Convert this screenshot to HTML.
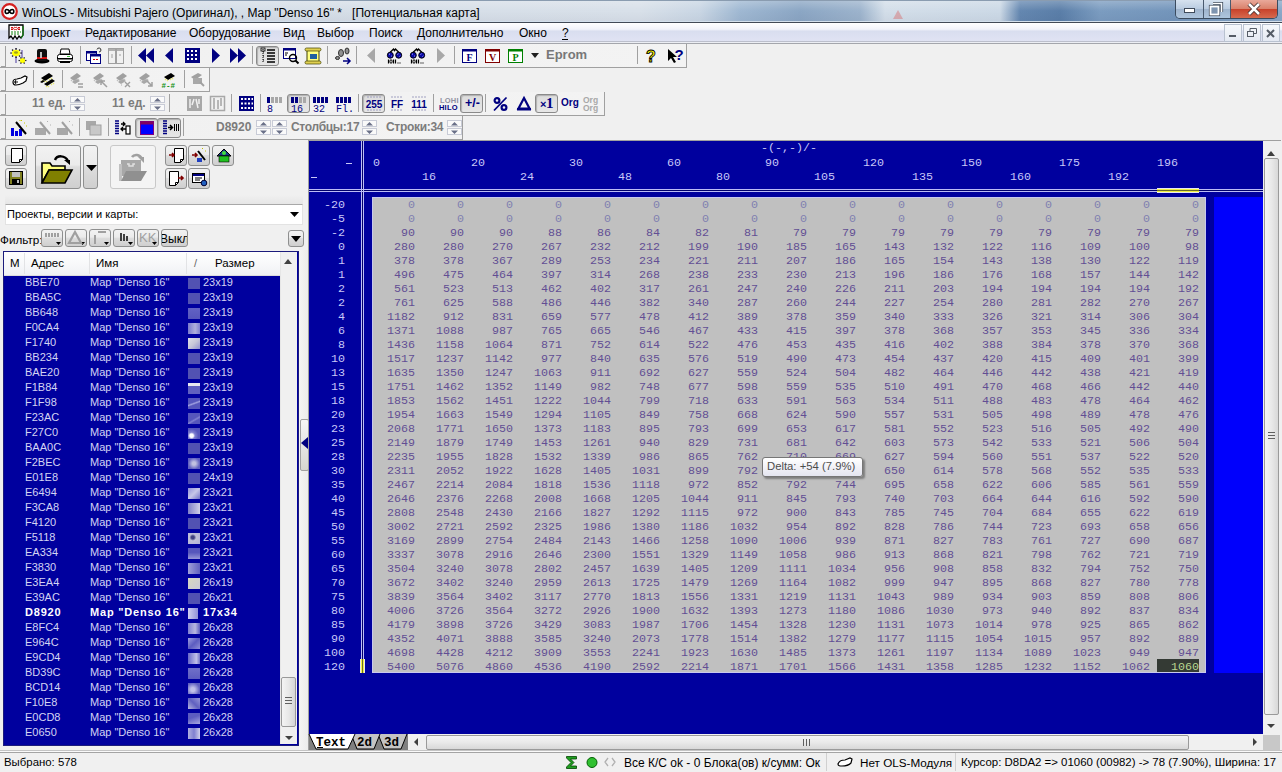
<!DOCTYPE html><html><head><meta charset="utf-8"><style>
*{box-sizing:border-box}
html,body{margin:0;padding:0}
body{width:1282px;height:772px;overflow:hidden;position:relative;background:#f0f0f0;font-family:"Liberation Sans",sans-serif;font-size:12px;color:#000}
.ab{position:absolute}
.t{position:absolute;white-space:nowrap;line-height:1}
svg{position:absolute;overflow:visible}
.tb{position:absolute;border-bottom:1px solid #a0a0a0;border-right:1px solid #a0a0a0;background:#f0f0f0}
.grip{position:absolute;left:5px;top:2px;bottom:1px;width:1px;background:#a0a0a0}
.sep{position:absolute;top:3px;width:1px;height:17px;background:#a0a0a0}
.pr{position:absolute;border:1px solid #8c8c8c;border-radius:3px;background:linear-gradient(#e4e4e4,#d8d8d8)}
.spin{position:absolute;width:15px;height:15px}
.mono{font-family:"Liberation Mono",monospace}
</style></head><body>
<div class="ab" style="left:0;top:0;width:1282px;height:22px;background:linear-gradient(90deg,#d3dce6 0px,#d8e0e9 640px,#c9d6e4 700px,#9fb8d2 740px,#8ba6c4 800px,#9cb3cc 860px,#d3dee9 885px,#ccd9e6 1000px,#6487b0 1020px,#5a7ea8 1060px,#7b9cc0 1100px,#7395bb 1175px,#8aa8c8 1282px)"></div>
<div class="ab" style="left:0;top:0;width:1282px;height:22px;background:linear-gradient(rgba(255,255,255,.25),rgba(255,255,255,0) 50%,rgba(0,0,40,.04))"></div>
<div class="ab" style="left:0;top:21px;width:1282px;height:1px;background:#d4e0ec"></div>
<div class="ab" style="left:0;top:22px;width:1282px;height:1px;background:#424a56"></div>
<div class="ab" style="left:0;top:0;width:1282px;height:1px;background:#8a9cb0"></div>
<svg style="left:892px;top:8px" width="14" height="12"><path d="M6 2L11 11H1Z" fill="#d86a6a" opacity=".45"/></svg>
<svg style="left:1px;top:3px" width="17" height="17" viewBox="0 0 17 17"><circle cx="8.5" cy="8.5" r="7.3" fill="#fff" stroke="#d42020" stroke-width="2.2"/><path d="M8.5 8.5 C7 5.8 4.2 6 4.2 8.5 C4.2 11 7 11.2 8.5 8.5 C10 5.8 12.8 6 12.8 8.5 C12.8 11 10 11.2 8.5 8.5Z" fill="none" stroke="#000" stroke-width="1.6"/></svg>
<div class="t" style="left:22px;top:7px;font-size:12px;color:#000">WinOLS - Mitsubishi Pajero (Оригинал), , Map "Denso 16" * &nbsp;&nbsp;[Потенциальная карта]</div>
<div class="ab" style="left:1175px;top:0;width:103px;height:19px;border:1px solid #3b4b5e;border-top:none;border-radius:0 0 5px 5px;overflow:hidden"><div class="ab" style="left:0;top:0;width:28px;height:18px;background:linear-gradient(#d6e2ef,#b9cbe0 50%,#9fb4cd 51%,#aec5dd);border-right:1px solid #4a5a6e"></div><div class="ab" style="left:28px;top:0;width:27px;height:18px;background:linear-gradient(#d6e2ef,#b9cbe0 50%,#9fb4cd 51%,#aec5dd);border-right:1px solid #4a5a6e"></div><div class="ab" style="left:55px;top:0;width:48px;height:18px;background:linear-gradient(#e9a99a,#d9806a 50%,#c8412a 51%,#d66a4e)"></div></div>
<div class="ab" style="left:1184px;top:8px;width:11px;height:5px;background:#fff;border:1px solid #3e4a5a"></div>
<svg style="left:1209px;top:2px" width="14" height="14" viewBox="0 0 14 14"><path d="M4 1.5H12.5V10" fill="none" stroke="#3e4a5a" stroke-width="3.2"/><path d="M4 1.5H12.5V10" fill="none" stroke="#fff" stroke-width="1.6"/><rect x="1.5" y="4.5" width="8" height="8" fill="none" stroke="#3e4a5a" stroke-width="3.2"/><rect x="1.5" y="4.5" width="8" height="8" fill="#7f95b0" stroke="#fff" stroke-width="1.8"/></svg>
<svg style="left:1247px;top:3px" width="14" height="12" viewBox="0 0 14 12"><path d="M2 1L12 11M12 1L2 11" stroke="#3a2a2a" stroke-width="4.2"/><path d="M2 1L12 11M12 1L2 11" stroke="#fff" stroke-width="2.6"/></svg>
<div class="ab" style="left:0;top:23px;width:1282px;height:18px;background:linear-gradient(#ffffff,#f2f3fa 35%,#d9deef 45%,#e0e3f3)"></div>
<div class="ab" style="left:0;top:41px;width:1282px;height:1px;background:#bcbfcc"></div>
<div class="ab" style="left:0;top:42px;width:1282px;height:1px;background:#eceef4"></div>
<div class="ab" style="left:0;top:43px;width:1282px;height:1px;background:#a4a6ac"></div>
<svg style="left:8px;top:24px" width="16" height="17" viewBox="0 0 16 17"><path d="M1 1H15V11L13 14L11 12L9 15L7 12L5 15L3 12L1 14Z" fill="#fff" stroke="#000" stroke-width="1.3"/><path d="M15 2V11L13 14" fill="none" stroke="#108010" stroke-width="1.2"/><path d="M3 3.5H5M4 3V6M3 5.5H5M7.5 3.5A1.2 1.2 0 1 0 7.5 5.5A1.2 1.2 0 1 0 7.5 3.5M10 3.5H12M11 3V6M10 5.5H12" fill="none" stroke="#d01010" stroke-width="1"/><path d="M3 8H13M3 10H12" stroke="#108010" stroke-width="1" stroke-dasharray="2 1"/></svg>
<div class="t" style="left:31px;top:27px;font-size:12px">Проект</div>
<div class="t" style="left:85px;top:27px;font-size:12px">Редактирование</div>
<div class="t" style="left:189px;top:27px;font-size:12px">Оборудование</div>
<div class="t" style="left:283px;top:27px;font-size:12px">Вид</div>
<div class="t" style="left:317px;top:27px;font-size:12px">Выбор</div>
<div class="t" style="left:369px;top:27px;font-size:12px">Поиск</div>
<div class="t" style="left:417px;top:27px;font-size:12px">Дополнительно</div>
<div class="t" style="left:519px;top:27px;font-size:12px">Окно</div>
<div class="t" style="left:562px;top:27px;font-size:12px">?</div>
<div class="ab" style="left:562px;top:39px;width:6px;height:1px;background:#000"></div>
<div class="ab" style="left:1224px;top:24px;width:18px;height:18px;border:1px solid #b9c2d0;background:linear-gradient(#f6f8fb,#e4e9f2)"></div>
<div class="ab" style="left:1243px;top:24px;width:18px;height:18px;border:1px solid #b9c2d0;background:linear-gradient(#f6f8fb,#e4e9f2)"></div>
<div class="ab" style="left:1262px;top:24px;width:18px;height:18px;border:1px solid #b9c2d0;background:linear-gradient(#f6f8fb,#e4e9f2)"></div>
<div class="ab" style="left:1229px;top:35px;width:7px;height:2px;background:#555c66"></div>
<svg style="left:1247px;top:28px" width="10" height="10"><rect x="0.5" y="3.5" width="6" height="5" fill="none" stroke="#555c66"/><path d="M3 3V0.5H9.5V5.5H7" fill="none" stroke="#555c66"/></svg>
<svg style="left:1266px;top:29px" width="10" height="10"><path d="M1 1L8 8M8 1L1 8" stroke="#555c66" stroke-width="2"/></svg>
<div class="ab" style="left:0px;top:44px;width:687px;height:24px;border-bottom:1px solid #a0a0a0;border-right:1px solid #a0a0a0;background:linear-gradient(90deg,#f0f0f0,#f3f3f3)"></div>
<div class="ab" style="left:5px;top:46px;width:1px;height:21px;background:#a0a0a0"></div>
<div class="ab" style="left:1px;top:66px;width:4px;height:1px;background:#a0a0a0"></div>
<svg style="left:11px;top:48px" width="16" height="16" viewBox="0 0 16 16"><rect x="4" y="0" width="2" height="15" fill="#9c94c8"/><rect x="10" y="2" width="2" height="13" fill="#9c94c8"/><ellipse cx="5" cy="5" rx="4" ry="3.3" fill="#ffff00"/><ellipse cx="5" cy="4.5" rx="2" ry="1.3" fill="#a0a020"/><rect x="9.4" y="4.4" width="1.3" height="1.3" fill="#000"/><rect x="7.9" y="7.4" width="1.3" height="1.3" fill="#000"/><rect x="4.4" y="8.6" width="1.3" height="1.3" fill="#000"/><rect x="0.9" y="7.4" width="1.3" height="1.3" fill="#000"/><rect x="-0.6" y="4.4" width="1.3" height="1.3" fill="#000"/><rect x="0.9" y="1.4" width="1.3" height="1.3" fill="#000"/><rect x="4.4" y="0.2" width="1.3" height="1.3" fill="#000"/><rect x="7.9" y="1.4" width="1.3" height="1.3" fill="#000"/><circle cx="11.5" cy="12.5" r="2.6" fill="#ffff00"/><rect x="14.2" y="11.9" width="1.2" height="1.2" fill="#000"/><rect x="12.6" y="14.5" width="1.2" height="1.2" fill="#000"/><rect x="9.3" y="14.5" width="1.2" height="1.2" fill="#000"/><rect x="7.6" y="11.9" width="1.2" height="1.2" fill="#000"/><rect x="9.2" y="9.3" width="1.2" height="1.2" fill="#000"/><rect x="12.6" y="9.3" width="1.2" height="1.2" fill="#000"/></svg>
<svg style="left:34px;top:48px" width="16" height="16" viewBox="0 0 16 16"><ellipse cx="8" cy="13" rx="7.5" ry="2.5" fill="#000"/><rect x="3" y="1" width="10" height="12" rx="2" fill="#101010"/><rect x="3" y="9" width="10" height="2" fill="#d01010"/><rect x="6" y="4" width="2" height="6" fill="#c0c0c0"/></svg>
<svg style="left:57px;top:48px" width="16" height="16" viewBox="0 0 16 16"><path d="M4 1H12L13 6H3Z" fill="#fff" stroke="#000"/><rect x="0.5" y="6.5" width="15" height="7" rx="2" fill="#fff" stroke="#000"/><rect x="1" y="10" width="14" height="1.5" fill="#000"/><rect x="3" y="13" width="10" height="2" fill="#000"/><rect x="10" y="8" width="3" height="1" fill="#40c040"/></svg>
<div class="ab" style="left:80px;top:46px;width:1px;height:18px;background:#a0a0a0"></div>
<svg style="left:86px;top:48px" width="16" height="16" viewBox="0 0 16 16"><rect x="0.5" y="3.5" width="10" height="9" fill="#fff" stroke="#000080"/><rect x="0.5" y="3.5" width="10" height="2" fill="#000080"/><rect x="4.5" y="6.5" width="10" height="9" fill="#fff" stroke="#000080"/><rect x="4.5" y="6.5" width="10" height="2" fill="#000080"/><rect x="7" y="11" width="2" height="1" fill="#d00"/><rect x="10" y="11" width="2" height="1" fill="#d00"/><path d="M11 1.5A2 2 0 1 1 13 4" fill="none" stroke="#000" stroke-width=".8"/></svg>
<svg style="left:108px;top:48px" width="16" height="16" viewBox="0 0 16 16"><rect x="0.5" y="0.5" width="7" height="15" fill="none" stroke="#a0a0a0"/><rect x="8.5" y="0.5" width="7" height="15" fill="none" stroke="#a0a0a0"/><rect x="1" y="1" width="6" height="2" fill="#b0b0b0"/><rect x="9" y="1" width="6" height="2" fill="#b0b0b0"/><path d="M3 7H5M11 7H13M3 9H5" stroke="#a0a0a0"/></svg>
<div class="ab" style="left:131px;top:46px;width:1px;height:18px;background:#a0a0a0"></div>
<svg style="left:138px;top:48px" width="16" height="16" viewBox="0 0 16 16"><path d="M8 0V15L0 7.5Z M16 0V15L8 7.5Z" fill="#000080"/></svg>
<svg style="left:164px;top:48px" width="10" height="16" viewBox="0 0 10 16"><path d="M9 0V15L1 7.5Z" fill="#000080"/></svg>
<svg style="left:185px;top:48px" width="16" height="16" viewBox="0 0 16 16"><rect x="0" y="0" width="15" height="15" fill="#000080"/><path d="M2 3H14M2 7H14M2 11H14" stroke="#fff" stroke-width="2" stroke-dasharray="2 2"/></svg>
<svg style="left:211px;top:48px" width="10" height="16" viewBox="0 0 10 16"><path d="M1 0V15L9 7.5Z" fill="#000080"/></svg>
<svg style="left:230px;top:48px" width="16" height="16" viewBox="0 0 16 16"><path d="M0 0V15L8 7.5Z M8 0V15L16 7.5Z" fill="#000080"/></svg>
<div class="ab" style="left:252px;top:46px;width:1px;height:18px;background:#a0a0a0"></div>
<div class="ab" style="left:256px;top:46px;width:23px;height:20px;border:1px solid #8a8a8a;border-radius:3px;background:linear-gradient(#dcdcdc,#e6e6e6);box-shadow:inset 1px 1px 1px #b0b0b0"></div>
<svg style="left:260px;top:48px" width="16" height="16" viewBox="0 0 16 16"><path d="M3 1V15M3 4H5M3 8H5M3 12H5" stroke="#000" stroke-width="1" stroke-dasharray="1 1"/><path d="M7 2H15M7 5H15M7 8H15M7 11H15M7 14H15" stroke="#000" stroke-width="1.5"/><rect x="1" y="0" width="4" height="3" fill="none" stroke="#000" stroke-width=".8"/></svg>
<svg style="left:283px;top:48px" width="16" height="16" viewBox="0 0 16 16"><rect x="0.5" y="0.5" width="12" height="10" fill="#fff" stroke="#000080"/><rect x="0.5" y="0.5" width="12" height="2" fill="#000080"/><path d="M2 5H5M2 7H4" stroke="#000"/><circle cx="10" cy="10" r="3.5" fill="none" stroke="#000" stroke-width="1.4"/><path d="M12.5 12.5L15.5 15.5" stroke="#000" stroke-width="2"/></svg>
<svg style="left:305px;top:48px" width="16" height="16" viewBox="0 0 16 16"><path d="M2 1H14V15H2Z" fill="#ffff80" stroke="#404000"/><rect x="0" y="0" width="16" height="3" rx="1.5" fill="#e0d050" stroke="#404000" stroke-width=".7"/><rect x="0" y="13" width="16" height="3" rx="1.5" fill="#e0d050" stroke="#404000" stroke-width=".7"/><rect x="5" y="6" width="7" height="5" fill="#2060a0"/></svg>
<div class="ab" style="left:327px;top:46px;width:1px;height:18px;background:#a0a0a0"></div>
<svg style="left:335px;top:48px" width="16" height="16" viewBox="0 0 16 16"><ellipse cx="6" cy="5" rx="2.5" ry="3.5" fill="#909090" stroke="#303030"/><ellipse cx="12" cy="3" rx="2" ry="3" fill="#909090" stroke="#303030"/><ellipse cx="2.5" cy="10" rx="2" ry="1.5" fill="#909090" stroke="#303030"/><path d="M8 13H15M12 10L15 13L12 16" fill="none" stroke="#000080" stroke-width="1.5"/></svg>
<div class="ab" style="left:356px;top:46px;width:1px;height:18px;background:#a0a0a0"></div>
<svg style="left:366px;top:48px" width="10" height="16" viewBox="0 0 10 16"><path d="M9 0V15L1 7.5Z" fill="#a8a8a8"/></svg>
<svg style="left:387px;top:48px" width="15" height="16" viewBox="0 0 15 16"><path d="M2.5 5L6.5 1L7.5 2.5L8.5 1L12.5 5" fill="none" stroke="#000" stroke-width="1.4"/><circle cx="3.3" cy="7.2" r="3" fill="#0a0aa8" stroke="#000" stroke-width=".9"/><circle cx="11.7" cy="7.2" r="3" fill="#0a0aa8" stroke="#000" stroke-width=".9"/><path d="M2 6.5L3 5.8M4 8.5L4.8 7.8M10.5 6.5L11.5 5.8M12.5 8.5L13.3 7.8" stroke="#c0c0ff" stroke-width=".9"/><path d="M1.5 11.5V15.5M6.5 11.5V15.5M8.5 11.5V15.5M11 14.5V15.5M13 14.5V15.5" stroke="#000" stroke-width="1.2"/><ellipse cx="4" cy="13.5" rx="1.1" ry="1.8" fill="none" stroke="#000" stroke-width="1"/></svg>
<svg style="left:410px;top:48px" width="15" height="16" viewBox="0 0 15 16"><path d="M2.5 5L6.5 1L7.5 2.5L8.5 1L12.5 5" fill="none" stroke="#000" stroke-width="1.4"/><circle cx="3.3" cy="7.2" r="3" fill="#0a0aa8" stroke="#000" stroke-width=".9"/><circle cx="11.7" cy="7.2" r="3" fill="#0a0aa8" stroke="#000" stroke-width=".9"/><path d="M2 6.5L3 5.8M4 8.5L4.8 7.8M10.5 6.5L11.5 5.8M12.5 8.5L13.3 7.8" stroke="#c0c0ff" stroke-width=".9"/><path d="M1.5 11.5V15.5M6.5 11.5V15.5M8.5 11.5V15.5M11 14.5V15.5M13 14.5V15.5" stroke="#000" stroke-width="1.2"/><ellipse cx="4" cy="13.5" rx="1.1" ry="1.8" fill="none" stroke="#000" stroke-width="1"/></svg>
<svg style="left:436px;top:48px" width="10" height="16" viewBox="0 0 10 16"><path d="M1 0V15L9 7.5Z" fill="#a8a8a8"/></svg>
<div class="ab" style="left:454px;top:46px;width:1px;height:18px;background:#a0a0a0"></div>
<svg style="left:462px;top:48px" width="16" height="16" viewBox="0 0 16 16"><rect x="0.5" y="1.5" width="14" height="13" fill="#fff" stroke="#000080"/><rect x="0.5" y="1.5" width="14" height="2" fill="#000080"/><text x="7.5" y="13" font-size="10" font-weight="bold" fill="#000080" text-anchor="middle" font-family="Liberation Serif">F</text></svg>
<svg style="left:485px;top:48px" width="16" height="16" viewBox="0 0 16 16"><rect x="0.5" y="1.5" width="14" height="13" fill="#fff" stroke="#800000"/><rect x="0.5" y="1.5" width="14" height="2" fill="#800000"/><text x="7.5" y="13" font-size="10" font-weight="bold" fill="#800000" text-anchor="middle" font-family="Liberation Serif">V</text></svg>
<svg style="left:508px;top:48px" width="16" height="16" viewBox="0 0 16 16"><rect x="0.5" y="1.5" width="14" height="13" fill="#fff" stroke="#008000"/><rect x="0.5" y="1.5" width="14" height="2" fill="#008000"/><text x="7.5" y="13" font-size="10" font-weight="bold" fill="#008000" text-anchor="middle" font-family="Liberation Serif">P</text></svg>
<svg style="left:531px;top:53px" width="8" height="5" viewBox="0 0 8 5"><path d="M0 0H8L4 5Z" fill="#202020"/></svg>
<div class="t" style="left:546px;top:48px;font-size:13px;font-weight:bold;color:#787878">Eprom</div>
<div class="ab" style="left:637px;top:46px;width:1px;height:18px;background:#a0a0a0"></div>
<svg style="left:646px;top:48px" width="11" height="16" viewBox="0 0 11 16"><text x="5" y="14" font-size="16" font-weight="bold" fill="#ffff00" stroke="#000" stroke-width=".9" text-anchor="middle" font-family="Liberation Sans">?</text></svg>
<svg style="left:667px;top:48px" width="16" height="16" viewBox="0 0 16 16"><path d="M1 1V13L4 10L7 15L9 14L6 9H10Z" fill="#000"/><text x="12" y="12" font-size="15" font-weight="bold" fill="#000080" text-anchor="middle" font-family="Liberation Sans">?</text></svg>
<div class="ab" style="left:0px;top:68px;width:210px;height:24px;border-bottom:1px solid #a0a0a0;border-right:1px solid #a0a0a0;background:linear-gradient(90deg,#f0f0f0,#f3f3f3)"></div>
<div class="ab" style="left:5px;top:70px;width:1px;height:21px;background:#a0a0a0"></div>
<div class="ab" style="left:1px;top:90px;width:4px;height:1px;background:#a0a0a0"></div>
<svg style="left:12px;top:72px" width="16" height="16" viewBox="0 0 16 16"><path d="M1 10C1 8 3 7 5 7L9 6L13 4L15 5L14 9L11 11C9 12 6 13 4 13C2 13 1 12 1 10Z" fill="#fff" stroke="#000" stroke-width="1.2"/><path d="M2 10H6M4 8C3 9 3 11 4 12" fill="none" stroke="#000" stroke-width="1"/></svg>
<div class="ab" style="left:33px;top:70px;width:1px;height:18px;background:#a0a0a0"></div>
<svg style="left:40px;top:72px" width="16" height="16" viewBox="0 0 16 16"><path d="M1 6L9 1L13 4L5 9Z" fill="#000"/><path d="M2 8L3 9M4 9L5 10M6 9L7 10M9 7L10 8M11 6L12 7" stroke="#e8e870" stroke-width="1.2"/><path d="M4 12L12 7L15 9L7 14Z" fill="#000"/><path d="M6 14L7 15M8 14L9 15M11 12L12 13M13 11L14 12" stroke="#e8e870" stroke-width="1.2"/><path d="M0 10L3 8L5 9L2 11Z" fill="#000"/></svg>
<div class="ab" style="left:62px;top:70px;width:1px;height:18px;background:#a0a0a0"></div>
<svg style="left:69px;top:72px" width="16" height="16" viewBox="0 0 16 16"><path d="M1 6L8 1L12 4L5 9Z" fill="#a0a0a0"/><path d="M2 8L3 9M4 9L5 10M7 8L8 9M9 7L10 8" stroke="#c0c0c0" stroke-width="1.2"/><path d="M3 10L8 7L11 9L6 12Z" fill="#a8a8a8"/><path d="M9 12H14M9 15H14" stroke="#a0a0a0" stroke-width="1.5"/></svg>
<svg style="left:92px;top:72px" width="16" height="16" viewBox="0 0 16 16"><path d="M1 6L8 1L12 4L5 9Z" fill="#a0a0a0"/><path d="M2 8L3 9M4 9L5 10M7 8L8 9M9 7L10 8" stroke="#c0c0c0" stroke-width="1.2"/><path d="M3 10L8 7L11 9L6 12Z" fill="#a8a8a8"/><path d="M15 15L9 9M9 9V13M9 9H13" fill="none" stroke="#a0a0a0" stroke-width="1.5"/></svg>
<svg style="left:115px;top:72px" width="16" height="16" viewBox="0 0 16 16"><path d="M1 6L8 1L12 4L5 9Z" fill="#a0a0a0"/><path d="M2 8L3 9M4 9L5 10M7 8L8 9M9 7L10 8" stroke="#c0c0c0" stroke-width="1.2"/><path d="M3 10L8 7L11 9L6 12Z" fill="#a8a8a8"/><path d="M10 10L15 15M15 10L10 15" stroke="#a0a0a0" stroke-width="1.4"/><path d="M6 13H8" stroke="#b0b0b0" stroke-dasharray="1 1"/></svg>
<svg style="left:138px;top:72px" width="16" height="16" viewBox="0 0 16 16"><path d="M1 6L8 1L12 4L5 9Z" fill="#a0a0a0"/><path d="M2 8L3 9M4 9L5 10M7 8L8 9M9 7L10 8" stroke="#c0c0c0" stroke-width="1.2"/><path d="M3 10L8 7L11 9L6 12Z" fill="#a8a8a8"/><path d="M9 9L14 14M14 10V14H10" fill="none" stroke="#a0a0a0" stroke-width="1.5"/></svg>
<svg style="left:162px;top:72px" width="16" height="16" viewBox="0 0 16 16"><path d="M2 5L9 1L13 4L6 8Z" fill="#000"/><path d="M3 7L4 8M5 8L6 9M8 7L9 8M10 6L11 7" stroke="#e8e870" stroke-width="1.2"/><text x="-0.5" y="15.5" font-size="7.5" font-weight="bold" fill="#109010" font-family="Liberation Mono">#-#</text></svg>
<div class="ab" style="left:184px;top:70px;width:1px;height:18px;background:#a0a0a0"></div>
<svg style="left:190px;top:72px" width="16" height="16" viewBox="0 0 16 16"><path d="M1 5L8 1L12 3L5 8Z" fill="#a0a0a0"/><rect x="3" y="6" width="9" height="6" fill="#a8a8a8"/><path d="M10 10L14 14" stroke="#a0a0a0" stroke-width="1.8"/></svg>
<div class="ab" style="left:0px;top:92px;width:605px;height:24px;border-bottom:1px solid #a0a0a0;border-right:1px solid #a0a0a0;background:linear-gradient(90deg,#f0f0f0,#f3f3f3)"></div>
<div class="ab" style="left:5px;top:94px;width:1px;height:21px;background:#a0a0a0"></div>
<div class="ab" style="left:1px;top:114px;width:4px;height:1px;background:#a0a0a0"></div>
<div class="t" style="left:32px;top:97px;font-size:12px;font-weight:bold;color:#7c7c7c">11 ед.</div>
<div class="ab" style="left:70px;top:96px;width:15px;height:7px;border:1px solid #c8cbd6;background:#fafafa"></div>
<div class="ab" style="left:70px;top:104px;width:15px;height:7px;border:1px solid #c8cbd6;background:#fafafa"></div>
<svg style="left:74px;top:98px" width="7" height="12"><path d="M0 3.5H7L3.5 0Z M0 8.5H7L3.5 12Z" fill="#6a7088"/></svg>
<div class="t" style="left:112px;top:97px;font-size:12px;font-weight:bold;color:#7c7c7c">11 ед.</div>
<div class="ab" style="left:150px;top:96px;width:15px;height:7px;border:1px solid #c8cbd6;background:#fafafa"></div>
<div class="ab" style="left:150px;top:104px;width:15px;height:7px;border:1px solid #c8cbd6;background:#fafafa"></div>
<svg style="left:154px;top:98px" width="7" height="12"><path d="M0 3.5H7L3.5 0Z M0 8.5H7L3.5 12Z" fill="#6a7088"/></svg>
<div class="ab" style="left:169px;top:94px;width:1px;height:18px;background:#a0a0a0"></div>
<svg style="left:187px;top:96px" width="16" height="16" viewBox="0 0 16 16"><rect x="0" y="0" width="15" height="15" fill="#a8a8a8"/><path d="M3 3V12M7 3L5 9M9 3L11 12M12 3V8" stroke="#f0f0f0" stroke-width="1.5"/></svg>
<svg style="left:210px;top:96px" width="16" height="16" viewBox="0 0 16 16"><rect x="0.5" y="0.5" width="14" height="14" fill="none" stroke="#a8a8a8" stroke-width="1.5"/><path d="M4 2V13M8 4V13M11 2V10" stroke="#a8a8a8" stroke-width="1.6"/></svg>
<div class="ab" style="left:231px;top:94px;width:1px;height:18px;background:#a0a0a0"></div>
<svg style="left:239px;top:96px" width="16" height="16" viewBox="0 0 16 16"><rect x="0" y="0" width="15" height="15" fill="#000080"/><path d="M2 3H14M2 7.5H14M2 12H14" stroke="#fff" stroke-width="2" stroke-dasharray="2 1.5"/></svg>
<div class="ab" style="left:260px;top:94px;width:1px;height:18px;background:#a0a0a0"></div>
<svg style="left:267px;top:97px" width="16" height="16" viewBox="0 0 16 16"><rect x="0" y="0" width="3" height="6" fill="#000080"/><rect x="4" y="0" width="3" height="6" fill="#a8a8a8"/><rect x="8" y="0" width="3" height="6" fill="#a8a8a8"/><rect x="12" y="0" width="3" height="6" fill="#a8a8a8"/><text x="0" y="15" font-size="10" fill="#000080" font-family="Liberation Mono">8</text></svg>
<div class="ab" style="left:287px;top:94px;width:23px;height:19px;border:1px solid #8a8a8a;border-radius:3px;background:linear-gradient(#dcdcdc,#e6e6e6);box-shadow:inset 1px 1px 1px #b0b0b0"></div>
<svg style="left:291px;top:97px" width="16" height="16" viewBox="0 0 16 16"><rect x="0" y="0" width="3" height="6" fill="#000080"/><rect x="4" y="0" width="3" height="6" fill="#000080"/><rect x="8" y="0" width="3" height="6" fill="#a8a8a8"/><rect x="12" y="0" width="3" height="6" fill="#a8a8a8"/><text x="0" y="15" font-size="10" fill="#000080" font-family="Liberation Mono">16</text></svg>
<svg style="left:313px;top:97px" width="16" height="16" viewBox="0 0 16 16"><rect x="0" y="0" width="3" height="6" fill="#000080"/><rect x="4" y="0" width="3" height="6" fill="#000080"/><rect x="8" y="0" width="3" height="6" fill="#000080"/><rect x="12" y="0" width="3" height="6" fill="#000080"/><text x="0" y="15" font-size="10" fill="#000080" font-family="Liberation Mono">32</text></svg>
<svg style="left:336px;top:97px" width="16" height="16" viewBox="0 0 16 16"><rect x="0" y="0" width="3" height="6" fill="#000080"/><rect x="4" y="0" width="3" height="6" fill="#000080"/><rect x="8" y="0" width="3" height="6" fill="#000080"/><rect x="12" y="0" width="3" height="6" fill="#000080"/><text x="0" y="15" font-size="10" fill="#000080" font-family="Liberation Mono">Fl.</text></svg>
<div class="ab" style="left:358px;top:94px;width:1px;height:18px;background:#a0a0a0"></div>
<div class="ab" style="left:362px;top:94px;width:23px;height:19px;border:1px solid #8a8a8a;border-radius:3px;background:linear-gradient(#dcdcdc,#e6e6e6);box-shadow:inset 1px 1px 1px #b0b0b0"></div>
<svg style="left:366px;top:96px" width="16" height="16" viewBox="0 0 16 16"><path d="M1 1H15M1 14H15" stroke="#a0a0c0" stroke-dasharray="2 1"/><text x="8" y="12" font-size="10" font-weight="bold" fill="#000080" text-anchor="middle" font-family="Liberation Sans">255</text></svg>
<svg style="left:390px;top:96px" width="14" height="16" viewBox="0 0 14 16"><path d="M1 1H13M1 14H13" stroke="#a0a0c0" stroke-dasharray="2 1"/><text x="7" y="12" font-size="10" font-weight="bold" fill="#000080" text-anchor="middle" font-family="Liberation Sans">FF</text></svg>
<svg style="left:411px;top:96px" width="16" height="16" viewBox="0 0 16 16"><path d="M1 1H15M1 14H15" stroke="#a0a0c0" stroke-dasharray="2 1"/><text x="8" y="12" font-size="10" font-weight="bold" fill="#000080" text-anchor="middle" font-family="Liberation Sans">111</text></svg>
<div class="ab" style="left:433px;top:94px;width:1px;height:18px;background:#a0a0a0"></div>
<div class="t" style="left:440px;top:97px;font-size:7.5px;letter-spacing:.2px;color:#9090a0;font-weight:bold">LOHI</div>
<div class="t" style="left:439px;top:104px;font-size:7.5px;font-weight:bold;letter-spacing:.2px;color:#000080">HILO</div>
<div class="ab" style="left:460px;top:94px;width:23px;height:19px;border:1px solid #8a8a8a;border-radius:3px;background:linear-gradient(#dcdcdc,#e6e6e6);box-shadow:inset 1px 1px 1px #b0b0b0"></div>
<div class="t" style="left:465px;top:97px;font-size:12.5px;font-weight:bold;color:#000080">+/-</div>
<div class="ab" style="left:485px;top:94px;width:1px;height:18px;background:#a0a0a0"></div>
<svg style="left:493px;top:97px" width="15" height="14" viewBox="0 0 15 14"><ellipse cx="4" cy="3.5" rx="2.4" ry="2.4" fill="none" stroke="#000080" stroke-width="2.2"/><ellipse cx="11" cy="10.5" rx="2.4" ry="2.4" fill="none" stroke="#000080" stroke-width="2.2"/><path d="M1 13.5L13.5 0.5" stroke="#000080" stroke-width="1.8"/></svg>
<svg style="left:517px;top:96px" width="14" height="15" viewBox="0 0 14 15"><path d="M7 2L12.5 12.5H1.5Z" fill="none" stroke="#000080" stroke-width="2.2"/><rect x="0" y="12" width="14" height="2.5" fill="#000080"/></svg>
<div class="ab" style="left:535px;top:94px;width:23px;height:19px;border:1px solid #8a8a8a;border-radius:3px;background:linear-gradient(#dcdcdc,#e6e6e6);box-shadow:inset 1px 1px 1px #b0b0b0"></div>
<div class="t" style="left:540px;top:99px;font-size:11px;font-weight:bold;color:#000080">×</div>
<div class="t" style="left:546px;top:96px;font-size:15px;font-weight:bold;color:#000080;font-family:'Liberation Serif'">1</div>
<div class="t" style="left:561px;top:98px;font-size:10px;font-weight:bold;color:#000080">Org</div>
<div class="t" style="left:583px;top:96px;font-size:8.5px;font-weight:bold;color:#a8a8a8;line-height:8px">Org<br>Org</div>
<div class="ab" style="left:0px;top:116px;width:463px;height:24px;border-bottom:1px solid #a0a0a0;border-right:1px solid #a0a0a0;background:linear-gradient(90deg,#f0f0f0,#f3f3f3)"></div>
<div class="ab" style="left:5px;top:118px;width:1px;height:21px;background:#a0a0a0"></div>
<div class="ab" style="left:1px;top:138px;width:4px;height:1px;background:#a0a0a0"></div>
<svg style="left:11px;top:120px" width="16" height="16" viewBox="0 0 16 16"><rect x="0" y="8" width="3" height="8" fill="#0000e0"/><rect x="4" y="11" width="3" height="5" fill="#0000e0"/><rect x="8" y="9" width="3" height="7" fill="#0000e0"/><path d="M5 2L15 14" stroke="#000" stroke-width="2"/><path d="M10 1L11 0M13 3L14 3M15 6L16 6M9 0L9 1" stroke="#c8c800"/></svg>
<svg style="left:35px;top:120px" width="16" height="16" viewBox="0 0 16 16"><rect x="0" y="8" width="11" height="7" fill="#a8a8a8"/><path d="M5 2L15 14" stroke="#a0a0a0" stroke-width="2"/><path d="M12 2L13 1M15 5L16 5" stroke="#b0b0b0"/></svg>
<svg style="left:57px;top:120px" width="16" height="16" viewBox="0 0 16 16"><rect x="0" y="8" width="11" height="7" fill="#a8a8a8"/><path d="M5 2L15 14" stroke="#a0a0a0" stroke-width="2"/><path d="M12 2L13 1M15 5L16 5" stroke="#b0b0b0"/></svg>
<div class="ab" style="left:79px;top:118px;width:1px;height:18px;background:#a0a0a0"></div>
<svg style="left:86px;top:120px" width="16" height="16" viewBox="0 0 16 16"><rect x="0" y="1" width="10" height="9" fill="#a8a8a8"/><rect x="4" y="5" width="11" height="10" fill="#c8c8c8" stroke="#a0a0a0"/></svg>
<div class="ab" style="left:108px;top:118px;width:1px;height:18px;background:#a0a0a0"></div>
<svg style="left:114px;top:120px" width="17" height="16" viewBox="0 0 17 16"><path d="M1 1H5M1 3.5H5M1 6H5M1 8.5H5M1 11H5M1 13.5H5" stroke="#000080" stroke-width="1.4"/><path d="M7 4H11M9 2L11 4L9 6M13 9H7M9 7L7 9L9 11" fill="none" stroke="#000" stroke-width="1.3"/><rect x="12" y="6" width="4" height="8" fill="#fff" stroke="#000" stroke-width="1.2"/></svg>
<div class="ab" style="left:135px;top:118px;width:23px;height:20px;border:1px solid #8a8a8a;border-radius:3px;background:linear-gradient(#dcdcdc,#e6e6e6);box-shadow:inset 1px 1px 1px #b0b0b0"></div>
<svg style="left:140px;top:121px" width="14" height="14" viewBox="0 0 14 14"><rect x="0.5" y="0.5" width="13" height="13" fill="#0000ff" stroke="#800080"/><rect x="0.5" y="0.5" width="13" height="3" fill="#800060"/></svg>
<div class="ab" style="left:157px;top:118px;width:24px;height:20px;border:1px solid #8a8a8a;border-radius:3px;background:linear-gradient(#dcdcdc,#e6e6e6);box-shadow:inset 1px 1px 1px #b0b0b0"></div>
<svg style="left:162px;top:120px" width="17" height="16" viewBox="0 0 17 16"><path d="M1 1H5M1 3.5H5M1 6H5M1 8.5H5M1 11H5M1 13.5H5" stroke="#000080" stroke-width="1.4"/><path d="M6 7.5H10M8 5L10.5 7.5L8 10" fill="none" stroke="#000" stroke-width="1.5"/><path d="M12.5 4V11M14.5 4V11M16.5 4V11" stroke="#000" stroke-width="1"/></svg>
<div class="ab" style="left:183px;top:118px;width:1px;height:18px;background:#a0a0a0"></div>
<div class="t" style="left:216px;top:121px;font-size:12px;font-weight:bold;color:#7c7c7c">D8920</div>
<div class="ab" style="left:256px;top:120px;width:15px;height:7px;border:1px solid #c8cbd6;background:#fafafa"></div>
<div class="ab" style="left:256px;top:128px;width:15px;height:7px;border:1px solid #c8cbd6;background:#fafafa"></div>
<svg style="left:260px;top:122px" width="7" height="12"><path d="M0 3.5H7L3.5 0Z M0 8.5H7L3.5 12Z" fill="#6a7088"/></svg>
<div class="ab" style="left:272px;top:120px;width:15px;height:7px;border:1px solid #c8cbd6;background:#fafafa"></div>
<div class="ab" style="left:272px;top:128px;width:15px;height:7px;border:1px solid #c8cbd6;background:#fafafa"></div>
<svg style="left:276px;top:122px" width="7" height="12"><path d="M0 3.5H7L3.5 0Z M0 8.5H7L3.5 12Z" fill="#6a7088"/></svg>
<div class="t" style="left:291px;top:121px;font-size:12px;letter-spacing:-.3px;font-weight:bold;color:#7c7c7c">Столбцы:17</div>
<div class="ab" style="left:362px;top:120px;width:15px;height:7px;border:1px solid #c8cbd6;background:#fafafa"></div>
<div class="ab" style="left:362px;top:128px;width:15px;height:7px;border:1px solid #c8cbd6;background:#fafafa"></div>
<svg style="left:366px;top:122px" width="7" height="12"><path d="M0 3.5H7L3.5 0Z M0 8.5H7L3.5 12Z" fill="#6a7088"/></svg>
<div class="t" style="left:386px;top:121px;font-size:12px;letter-spacing:-.3px;font-weight:bold;color:#7c7c7c">Строки:34</div>
<div class="ab" style="left:447px;top:120px;width:15px;height:7px;border:1px solid #c8cbd6;background:#fafafa"></div>
<div class="ab" style="left:447px;top:128px;width:15px;height:7px;border:1px solid #c8cbd6;background:#fafafa"></div>
<svg style="left:451px;top:122px" width="7" height="12"><path d="M0 3.5H7L3.5 0Z M0 8.5H7L3.5 12Z" fill="#6a7088"/></svg>
<div class="ab" style="left:5px;top:145px;width:22px;height:21px;border:1px solid #8e8f8f;border-radius:3px;background:linear-gradient(#f2f2f2,#ebebeb 45%,#dddddd 50%,#cfcfcf)"></div>
<div class="ab" style="left:5px;top:168px;width:22px;height:21px;border:1px solid #8e8f8f;border-radius:3px;background:linear-gradient(#f2f2f2,#ebebeb 45%,#dddddd 50%,#cfcfcf)"></div>
<svg style="left:10px;top:148px" width="14" height="15" viewBox="0 0 14 15"><path d="M1.5 0.5H12.5V11.5L9.5 14.5H1.5Z" fill="#fff" stroke="#000"/><path d="M12.5 11.5H9.5V14.5" fill="none" stroke="#000"/></svg>
<svg style="left:9px;top:171px" width="14" height="14" viewBox="0 0 14 14"><rect x="0.5" y="0.5" width="13" height="13" fill="#808020" stroke="#000"/><rect x="3" y="1" width="8" height="5" fill="#c0c0c0"/><rect x="3" y="8" width="8" height="6" fill="#000"/><rect x="8" y="9" width="2" height="3" fill="#c0c0c0"/></svg>
<div class="ab" style="left:35px;top:145px;width:46px;height:44px;border:1px solid #8e8f8f;border-radius:3px;background:linear-gradient(#f2f2f2,#ebebeb 45%,#dddddd 50%,#cfcfcf)"></div>
<svg style="left:41px;top:153px" width="32" height="32" viewBox="0 0 32 32"><path d="M27 8C24 2 16 2 14 7" fill="none" stroke="#000" stroke-width="2.5"/><path d="M23 7H29V12Z" fill="#000"/><path d="M1 10H9L11 13H24V17H8L1 30Z" fill="#ffff80" stroke="#000" stroke-width="1.6"/><path d="M1 30L8 17H31L24 30Z" fill="#808000" stroke="#000" stroke-width="1.6"/></svg>
<div class="ab" style="left:83px;top:145px;width:15px;height:44px;border:1px solid #8e8f8f;border-radius:3px;background:linear-gradient(#f2f2f2,#ebebeb 45%,#dddddd 50%,#cfcfcf)"></div>
<svg style="left:86px;top:165px" width="11" height="6" viewBox="0 0 11 6"><path d="M0 0H11L5.5 6Z" fill="#000"/></svg>
<div class="ab" style="left:110px;top:145px;width:46px;height:44px;border:1px solid #c8c8c8;border-radius:3px;background:#f4f4f4"></div>
<svg style="left:116px;top:151px" width="32" height="32" viewBox="0 0 32 32"><path d="M26 8C24 3 18 3 16 6" fill="none" stroke="#a0a0a0" stroke-width="2.5"/><path d="M22 6H28V12Z" fill="#a0a0a0"/><rect x="5" y="9" width="20" height="16" fill="#a8a8a8"/><path d="M3 13H6V30H3Z" fill="#c0c0c0"/><path d="M5 30L10 20H31L25 30Z" fill="#909090"/><path d="M11 13H13V15H17V13H19" fill="none" stroke="#e0e0e0" stroke-width="1.5"/></svg>
<div class="ab" style="left:165px;top:145px;width:22px;height:21px;border:1px solid #8e8f8f;border-radius:3px;background:linear-gradient(#f2f2f2,#ebebeb 45%,#dddddd 50%,#cfcfcf)"></div>
<div class="ab" style="left:188px;top:145px;width:22px;height:21px;border:1px solid #8e8f8f;border-radius:3px;background:linear-gradient(#f2f2f2,#ebebeb 45%,#dddddd 50%,#cfcfcf)"></div>
<div class="ab" style="left:212px;top:145px;width:22px;height:21px;border:1px solid #8e8f8f;border-radius:3px;background:linear-gradient(#f2f2f2,#ebebeb 45%,#dddddd 50%,#cfcfcf)"></div>
<div class="ab" style="left:165px;top:168px;width:22px;height:21px;border:1px solid #8e8f8f;border-radius:3px;background:linear-gradient(#f2f2f2,#ebebeb 45%,#dddddd 50%,#cfcfcf)"></div>
<div class="ab" style="left:188px;top:168px;width:22px;height:21px;border:1px solid #8e8f8f;border-radius:3px;background:linear-gradient(#f2f2f2,#ebebeb 45%,#dddddd 50%,#cfcfcf)"></div>
<svg style="left:169px;top:148px" width="15" height="15" viewBox="0 0 15 15"><path d="M5.5 0.5H14.5V11.5L11.5 14.5H5.5Z" fill="#fff" stroke="#000"/><path d="M14.5 11.5H11.5V14.5" fill="none" stroke="#000"/><path d="M0 7H5M3 5L5 7L3 9" fill="none" stroke="#800000" stroke-width="1.6"/></svg>
<svg style="left:192px;top:148px" width="15" height="15" viewBox="0 0 15 15"><path d="M0 7H5M3 5L5 7L3 9" fill="none" stroke="#800000" stroke-width="1.6"/><path d="M6 3L13 12" stroke="#000" stroke-width="2"/><rect x="5" y="10" width="5" height="4" fill="#2040c0"/><path d="M10 1L11 0M13 3L14 3" stroke="#c0c000"/></svg>
<svg style="left:216px;top:148px" width="16" height="15" viewBox="0 0 16 15"><path d="M1 8L8 1L15 8Z" fill="#1a3a8a" stroke="#000"/><rect x="3" y="8" width="10" height="6" fill="#20c020" stroke="#000" stroke-width=".6"/><circle cx="8" cy="5" r="2" fill="#40e040"/></svg>
<svg style="left:169px;top:171px" width="15" height="15" viewBox="0 0 15 15"><path d="M0.5 0.5H9.5V11.5L6.5 14.5H0.5Z" fill="#fff" stroke="#000"/><path d="M9.5 11.5H6.5V14.5" fill="none" stroke="#000"/><path d="M9 7H14M12 5L14 7L12 9" fill="none" stroke="#800000" stroke-width="1.6"/></svg>
<svg style="left:192px;top:172px" width="15" height="15" viewBox="0 0 15 15"><rect x="0.5" y="1.5" width="12" height="9" fill="#fff" stroke="#000"/><rect x="1" y="2" width="11" height="2" fill="#000080"/><path d="M3 6H10M3 8H8" stroke="#000"/><circle cx="12" cy="11" r="2.8" fill="#2060c0" stroke="#003"/></svg>
<div class="ab" style="left:5px;top:195px;width:298px;height:9px;background:linear-gradient(#f0f0f0,#e6e6e6)"></div>
<div class="ab" style="left:5px;top:204px;width:298px;height:21px;background:#fff;border:1px solid #e3e3e3;border-top:1px solid #a8a8a8"></div>
<div class="t" style="left:7px;top:209px;font-size:11px">Проекты, версии и карты:</div>
<svg style="left:290px;top:212px" width="9" height="5" viewBox="0 0 9 5"><path d="M0 0H9L4.5 5Z" fill="#000"/></svg>
<div class="t" style="left:0px;top:234px;font-size:11.7px">Фильтр:</div>
<div class="ab" style="left:41px;top:229px;width:22px;height:18px;border:1px solid #8e8f8f;border-radius:3px;background:linear-gradient(#f2f2f2,#ebebeb 45%,#dddddd 50%,#cfcfcf)"></div>
<svg style="left:56px;top:242px" width="5" height="3" viewBox="0 0 5 3"><path d="M0 0H5L2.5 3Z" fill="#000"/></svg>
<div class="ab" style="left:65px;top:229px;width:22px;height:18px;border:1px solid #8e8f8f;border-radius:3px;background:linear-gradient(#f2f2f2,#ebebeb 45%,#dddddd 50%,#cfcfcf)"></div>
<svg style="left:80px;top:242px" width="5" height="3" viewBox="0 0 5 3"><path d="M0 0H5L2.5 3Z" fill="#000"/></svg>
<div class="ab" style="left:89px;top:229px;width:22px;height:18px;border:1px solid #8e8f8f;border-radius:3px;background:linear-gradient(#f2f2f2,#ebebeb 45%,#dddddd 50%,#cfcfcf)"></div>
<svg style="left:104px;top:242px" width="5" height="3" viewBox="0 0 5 3"><path d="M0 0H5L2.5 3Z" fill="#000"/></svg>
<div class="ab" style="left:113px;top:229px;width:22px;height:18px;border:1px solid #8e8f8f;border-radius:3px;background:linear-gradient(#f2f2f2,#ebebeb 45%,#dddddd 50%,#cfcfcf)"></div>
<svg style="left:128px;top:242px" width="5" height="3" viewBox="0 0 5 3"><path d="M0 0H5L2.5 3Z" fill="#000"/></svg>
<div class="ab" style="left:137px;top:229px;width:22px;height:18px;border:1px solid #8e8f8f;border-radius:3px;background:linear-gradient(#f2f2f2,#ebebeb 45%,#dddddd 50%,#cfcfcf)"></div>
<svg style="left:152px;top:242px" width="5" height="3" viewBox="0 0 5 3"><path d="M0 0H5L2.5 3Z" fill="#000"/></svg>
<svg style="left:45px;top:232px" width="14" height="8" viewBox="0 0 14 8"><path d="M0 3H14" stroke="#a0a0a0" stroke-width="4" stroke-dasharray="2 1"/></svg>
<svg style="left:69px;top:231px" width="14" height="13" viewBox="0 0 14 13"><path d="M6 1L12 12H0Z" fill="none" stroke="#a0a0a0" stroke-width="2.2"/></svg>
<svg style="left:93px;top:231px" width="14" height="13" viewBox="0 0 14 13"><path d="M2 4V13M5 1H13" stroke="#a0a0a0" stroke-width="2"/></svg>
<svg style="left:117px;top:231px" width="14" height="12" viewBox="0 0 14 12"><path d="M4 2V10M7 3V10M10 5V10" stroke="#404040" stroke-width="2"/></svg>
<div class="t" style="left:139px;top:231px;font-size:13px;color:#a0a0a0">KK</div>
<div class="ab" style="left:161px;top:229px;width:27px;height:18px;border:1px solid #8e8f8f;border-radius:3px;background:linear-gradient(#f2f2f2,#ebebeb 45%,#dddddd 50%,#cfcfcf)"></div>
<div class="ab" style="left:162px;top:230px;width:25px;height:16px;overflow:hidden"><div class="t" style="left:-2px;top:3px;font-size:12px">Выкл</div></div>
<div class="ab" style="left:288px;top:230px;width:16px;height:17px;border:1px solid #8e8f8f;border-radius:3px;background:linear-gradient(#f2f2f2,#ebebeb 45%,#dddddd 50%,#cfcfcf)"></div>
<svg style="left:291px;top:236px" width="10" height="6" viewBox="0 0 10 6"><path d="M0 0H10L5 6Z" fill="#000"/></svg>
<div class="ab" style="left:3px;top:251px;width:296px;height:495px;border:1px solid #1c1c7c;background:#00009e"></div>
<div class="ab" style="left:4px;top:252px;width:276px;height:24px;background:linear-gradient(#ffffff,#f6f7f9 60%,#eef0f3)"></div>
<div class="ab" style="left:4px;top:275px;width:276px;height:1px;background:#dcdcdc"></div>
<div class="ab" style="left:24px;top:253px;width:1px;height:21px;background:#e2e3e5"></div>
<div class="ab" style="left:89px;top:253px;width:1px;height:21px;background:#e2e3e5"></div>
<div class="ab" style="left:186px;top:253px;width:1px;height:21px;background:#e2e3e5"></div>
<div class="t" style="left:10px;top:258px;font-size:11.5px">M</div>
<div class="t" style="left:31px;top:258px;font-size:11.5px">Адрес</div>
<div class="t" style="left:96px;top:258px;font-size:11.5px">Имя</div>
<div class="t" style="left:194px;top:258px;font-size:11px;color:#666">/</div>
<div class="t" style="left:215px;top:258px;font-size:11.5px">Размер</div>
<div class="t" style="left:25px;top:277px;font-size:11px;color:#d4d4f4">BBE70</div>
<div class="t" style="left:90px;top:277px;font-size:11px;color:#d4d4f4">Map "Denso 16"</div>
<div class="t" style="left:203px;top:277px;font-size:11px;color:#d4d4f4">23x19</div>
<div class="ab" style="left:188px;top:278px;width:12px;height:11px;background:#5252b2"></div>
<div class="t" style="left:25px;top:292px;font-size:11px;color:#d4d4f4">BBA5C</div>
<div class="t" style="left:90px;top:292px;font-size:11px;color:#d4d4f4">Map "Denso 16"</div>
<div class="t" style="left:203px;top:292px;font-size:11px;color:#d4d4f4">23x19</div>
<div class="ab" style="left:188px;top:293px;width:12px;height:11px;background:#5252b2"></div>
<div class="t" style="left:25px;top:307px;font-size:11px;color:#d4d4f4">BB648</div>
<div class="t" style="left:90px;top:307px;font-size:11px;color:#d4d4f4">Map "Denso 16"</div>
<div class="t" style="left:203px;top:307px;font-size:11px;color:#d4d4f4">23x19</div>
<div class="ab" style="left:188px;top:308px;width:12px;height:11px;background:linear-gradient(#6262c4,#5656bc)"></div>
<div class="t" style="left:25px;top:322px;font-size:11px;color:#d4d4f4">F0CA4</div>
<div class="t" style="left:90px;top:322px;font-size:11px;color:#d4d4f4">Map "Denso 16"</div>
<div class="t" style="left:203px;top:322px;font-size:11px;color:#d4d4f4">23x19</div>
<div class="ab" style="left:188px;top:323px;width:12px;height:11px;background:linear-gradient(90deg,#7a7acc,#b0b0dc 60%,#8080d0)"></div>
<div class="t" style="left:25px;top:337px;font-size:11px;color:#d4d4f4">F1740</div>
<div class="t" style="left:90px;top:337px;font-size:11px;color:#d4d4f4">Map "Denso 16"</div>
<div class="t" style="left:203px;top:337px;font-size:11px;color:#d4d4f4">23x19</div>
<div class="ab" style="left:188px;top:338px;width:12px;height:11px;background:linear-gradient(135deg,#e0e0e8,#c8c8d8 50%,#9090d0)"></div>
<div class="t" style="left:25px;top:352px;font-size:11px;color:#d4d4f4">BB234</div>
<div class="t" style="left:90px;top:352px;font-size:11px;color:#d4d4f4">Map "Denso 16"</div>
<div class="t" style="left:203px;top:352px;font-size:11px;color:#d4d4f4">23x19</div>
<div class="ab" style="left:188px;top:353px;width:12px;height:11px;background:#5252b2"></div>
<div class="t" style="left:25px;top:367px;font-size:11px;color:#d4d4f4">BAE20</div>
<div class="t" style="left:90px;top:367px;font-size:11px;color:#d4d4f4">Map "Denso 16"</div>
<div class="t" style="left:203px;top:367px;font-size:11px;color:#d4d4f4">23x19</div>
<div class="ab" style="left:188px;top:368px;width:12px;height:11px;background:#5252b2"></div>
<div class="t" style="left:25px;top:382px;font-size:11px;color:#d4d4f4">F1B84</div>
<div class="t" style="left:90px;top:382px;font-size:11px;color:#d4d4f4">Map "Denso 16"</div>
<div class="t" style="left:203px;top:382px;font-size:11px;color:#d4d4f4">23x19</div>
<div class="ab" style="left:188px;top:383px;width:12px;height:11px;background:linear-gradient(#e8e8f0 30%,#6060c0 31%)"></div>
<div class="t" style="left:25px;top:397px;font-size:11px;color:#d4d4f4">F1F98</div>
<div class="t" style="left:90px;top:397px;font-size:11px;color:#d4d4f4">Map "Denso 16"</div>
<div class="t" style="left:203px;top:397px;font-size:11px;color:#d4d4f4">23x19</div>
<div class="ab" style="left:188px;top:398px;width:12px;height:11px;background:linear-gradient(160deg,#5656bc 40%,#a0a0e0 50%,#5656bc 60%)"></div>
<div class="t" style="left:25px;top:412px;font-size:11px;color:#d4d4f4">F23AC</div>
<div class="t" style="left:90px;top:412px;font-size:11px;color:#d4d4f4">Map "Denso 16"</div>
<div class="t" style="left:203px;top:412px;font-size:11px;color:#d4d4f4">23x19</div>
<div class="ab" style="left:188px;top:413px;width:12px;height:11px;background:linear-gradient(150deg,#5656bc 50%,#8080d0 60%,#5656bc 70%)"></div>
<div class="t" style="left:25px;top:427px;font-size:11px;color:#d4d4f4">F27C0</div>
<div class="t" style="left:90px;top:427px;font-size:11px;color:#d4d4f4">Map "Denso 16"</div>
<div class="t" style="left:203px;top:427px;font-size:11px;color:#d4d4f4">23x19</div>
<div class="ab" style="left:188px;top:428px;width:12px;height:11px;background:radial-gradient(circle at 30% 70%,#fff 15%,#8080d0 30%,#5656bc 60%)"></div>
<div class="t" style="left:25px;top:442px;font-size:11px;color:#d4d4f4">BAA0C</div>
<div class="t" style="left:90px;top:442px;font-size:11px;color:#d4d4f4">Map "Denso 16"</div>
<div class="t" style="left:203px;top:442px;font-size:11px;color:#d4d4f4">23x19</div>
<div class="ab" style="left:188px;top:443px;width:12px;height:11px;background:#5252b2"></div>
<div class="t" style="left:25px;top:457px;font-size:11px;color:#d4d4f4">F2BEC</div>
<div class="t" style="left:90px;top:457px;font-size:11px;color:#d4d4f4">Map "Denso 16"</div>
<div class="t" style="left:203px;top:457px;font-size:11px;color:#d4d4f4">23x19</div>
<div class="ab" style="left:188px;top:458px;width:12px;height:11px;background:radial-gradient(circle at 50% 50%,#c0c0e0 20%,#6060c0 70%)"></div>
<div class="t" style="left:25px;top:472px;font-size:11px;color:#d4d4f4">E01E8</div>
<div class="t" style="left:90px;top:472px;font-size:11px;color:#d4d4f4">Map "Denso 16"</div>
<div class="t" style="left:203px;top:472px;font-size:11px;color:#d4d4f4">24x19</div>
<div class="ab" style="left:188px;top:473px;width:12px;height:11px;background:#5252b2"></div>
<div class="t" style="left:25px;top:487px;font-size:11px;color:#d4d4f4">E6494</div>
<div class="t" style="left:90px;top:487px;font-size:11px;color:#d4d4f4">Map "Denso 16"</div>
<div class="t" style="left:203px;top:487px;font-size:11px;color:#d4d4f4">23x21</div>
<div class="ab" style="left:188px;top:488px;width:12px;height:11px;background:linear-gradient(135deg,#9090d8,#c8c8e8 50%,#7070c8)"></div>
<div class="t" style="left:25px;top:502px;font-size:11px;color:#d4d4f4">F3CA8</div>
<div class="t" style="left:90px;top:502px;font-size:11px;color:#d4d4f4">Map "Denso 16"</div>
<div class="t" style="left:203px;top:502px;font-size:11px;color:#d4d4f4">23x21</div>
<div class="ab" style="left:188px;top:503px;width:12px;height:11px;background:linear-gradient(90deg,#8080c8,#d0d0e8)"></div>
<div class="t" style="left:25px;top:517px;font-size:11px;color:#d4d4f4">F4120</div>
<div class="t" style="left:90px;top:517px;font-size:11px;color:#d4d4f4">Map "Denso 16"</div>
<div class="t" style="left:203px;top:517px;font-size:11px;color:#d4d4f4">23x21</div>
<div class="ab" style="left:188px;top:518px;width:12px;height:11px;background:#5252b2"></div>
<div class="t" style="left:25px;top:532px;font-size:11px;color:#d4d4f4">F5118</div>
<div class="t" style="left:90px;top:532px;font-size:11px;color:#d4d4f4">Map "Denso 16"</div>
<div class="t" style="left:203px;top:532px;font-size:11px;color:#d4d4f4">23x21</div>
<div class="ab" style="left:188px;top:533px;width:12px;height:11px;background:radial-gradient(circle at 40% 40%,#404080 15%,#c0c0d8 35%,#b0b0d8)"></div>
<div class="t" style="left:25px;top:547px;font-size:11px;color:#d4d4f4">EA334</div>
<div class="t" style="left:90px;top:547px;font-size:11px;color:#d4d4f4">Map "Denso 16"</div>
<div class="t" style="left:203px;top:547px;font-size:11px;color:#d4d4f4">23x21</div>
<div class="ab" style="left:188px;top:548px;width:12px;height:11px;background:linear-gradient(#5656bc 40%,#9898d8)"></div>
<div class="t" style="left:25px;top:562px;font-size:11px;color:#d4d4f4">F3830</div>
<div class="t" style="left:90px;top:562px;font-size:11px;color:#d4d4f4">Map "Denso 16"</div>
<div class="t" style="left:203px;top:562px;font-size:11px;color:#d4d4f4">23x21</div>
<div class="ab" style="left:188px;top:563px;width:12px;height:11px;background:linear-gradient(90deg,#a0a0d8,#6060c0)"></div>
<div class="t" style="left:25px;top:577px;font-size:11px;color:#d4d4f4">E3EA4</div>
<div class="t" style="left:90px;top:577px;font-size:11px;color:#d4d4f4">Map "Denso 16"</div>
<div class="t" style="left:203px;top:577px;font-size:11px;color:#d4d4f4">26x19</div>
<div class="ab" style="left:188px;top:578px;width:12px;height:11px;background:linear-gradient(135deg,#d8d8c0,#c8c8d8)"></div>
<div class="t" style="left:25px;top:592px;font-size:11px;color:#d4d4f4">E39AC</div>
<div class="t" style="left:90px;top:592px;font-size:11px;color:#d4d4f4">Map "Denso 16"</div>
<div class="t" style="left:203px;top:592px;font-size:11px;color:#d4d4f4">26x21</div>
<div class="ab" style="left:188px;top:593px;width:12px;height:11px;background:#5252b2"></div>
<div class="t" style="left:25px;top:607px;font-size:11px;font-weight:bold;color:#fff;letter-spacing:.8px">D8920</div>
<div class="t" style="left:90px;top:607px;font-size:11px;font-weight:bold;color:#fff;letter-spacing:.8px">Map "Denso 16"</div>
<div class="t" style="left:203px;top:607px;font-size:11px;font-weight:bold;color:#fff;letter-spacing:.8px">17x34</div>
<div class="ab" style="left:188px;top:608px;width:10px;height:11px;background:linear-gradient(90deg,#d0d0f0,#9090d8)"></div>
<div class="t" style="left:25px;top:622px;font-size:11px;color:#d4d4f4">E8FC4</div>
<div class="t" style="left:90px;top:622px;font-size:11px;color:#d4d4f4">Map "Denso 16"</div>
<div class="t" style="left:203px;top:622px;font-size:11px;color:#d4d4f4">26x28</div>
<div class="ab" style="left:188px;top:623px;width:12px;height:11px;background:linear-gradient(90deg,#8080d0,#b8b8e0 60%,#5c5cc0)"></div>
<div class="t" style="left:25px;top:637px;font-size:11px;color:#d4d4f4">E964C</div>
<div class="t" style="left:90px;top:637px;font-size:11px;color:#d4d4f4">Map "Denso 16"</div>
<div class="t" style="left:203px;top:637px;font-size:11px;color:#d4d4f4">26x28</div>
<div class="ab" style="left:188px;top:638px;width:12px;height:11px;background:linear-gradient(135deg,#a0a0e0,#5c5cc0 50%,#9090d8)"></div>
<div class="t" style="left:25px;top:652px;font-size:11px;color:#d4d4f4">E9CD4</div>
<div class="t" style="left:90px;top:652px;font-size:11px;color:#d4d4f4">Map "Denso 16"</div>
<div class="t" style="left:203px;top:652px;font-size:11px;color:#d4d4f4">26x28</div>
<div class="ab" style="left:188px;top:653px;width:12px;height:11px;background:linear-gradient(90deg,#6868c8,#c0c0e8 70%,#7070c8)"></div>
<div class="t" style="left:25px;top:667px;font-size:11px;color:#d4d4f4">BD39C</div>
<div class="t" style="left:90px;top:667px;font-size:11px;color:#d4d4f4">Map "Denso 16"</div>
<div class="t" style="left:203px;top:667px;font-size:11px;color:#d4d4f4">26x28</div>
<div class="ab" style="left:188px;top:668px;width:12px;height:11px;background:linear-gradient(#7070c8,#5c5cc0)"></div>
<div class="t" style="left:25px;top:682px;font-size:11px;color:#d4d4f4">BCD14</div>
<div class="t" style="left:90px;top:682px;font-size:11px;color:#d4d4f4">Map "Denso 16"</div>
<div class="t" style="left:203px;top:682px;font-size:11px;color:#d4d4f4">26x28</div>
<div class="ab" style="left:188px;top:683px;width:12px;height:11px;background:radial-gradient(circle at 40% 60%,#c0c0e8 20%,#6060c0 70%)"></div>
<div class="t" style="left:25px;top:697px;font-size:11px;color:#d4d4f4">F10E8</div>
<div class="t" style="left:90px;top:697px;font-size:11px;color:#d4d4f4">Map "Denso 16"</div>
<div class="t" style="left:203px;top:697px;font-size:11px;color:#d4d4f4">26x28</div>
<div class="ab" style="left:188px;top:698px;width:12px;height:11px;background:linear-gradient(45deg,#b8b8e0,#6060c0 50%,#9898d8)"></div>
<div class="t" style="left:25px;top:712px;font-size:11px;color:#d4d4f4">E0CD8</div>
<div class="t" style="left:90px;top:712px;font-size:11px;color:#d4d4f4">Map "Denso 16"</div>
<div class="t" style="left:203px;top:712px;font-size:11px;color:#d4d4f4">26x28</div>
<div class="ab" style="left:188px;top:713px;width:12px;height:11px;background:linear-gradient(160deg,#5c5cc0 40%,#a8a8e0)"></div>
<div class="t" style="left:25px;top:727px;font-size:11px;color:#d4d4f4">E0650</div>
<div class="t" style="left:90px;top:727px;font-size:11px;color:#d4d4f4">Map "Denso 16"</div>
<div class="t" style="left:203px;top:727px;font-size:11px;color:#d4d4f4">26x28</div>
<div class="ab" style="left:188px;top:728px;width:12px;height:11px;background:linear-gradient(90deg,#b0b0e0,#8080d0 50%,#d0d0ec)"></div>
<div class="ab" style="left:280px;top:252px;width:17px;height:492px;background:#f0f0f0;border-left:1px solid #e6e6e6"></div>
<svg style="left:284px;top:259px" width="8" height="5" viewBox="0 0 8 5"><path d="M0 5H8L4 0Z" fill="#404040"/></svg>
<div class="ab" style="left:281px;top:677px;width:15px;height:50px;border:1px solid #999;border-radius:2px;background:linear-gradient(90deg,#f4f4f4,#e8e8e8 50%,#d6d6d6)"></div>
<div class="ab" style="left:285px;top:697px;width:7px;height:7px;border-top:1px solid #606060;border-bottom:1px solid #606060"></div><div class="ab" style="left:285px;top:700px;width:7px;height:1px;background:#606060"></div>
<svg style="left:285px;top:736px" width="8" height="4" viewBox="0 0 8 4"><path d="M0 0H8L4 4Z" fill="#404040"/></svg>
<div class="ab" style="left:299px;top:250px;width:9px;height:500px;background:linear-gradient(90deg,#f4f4f4,#ebebeb)"></div>
<div class="ab" style="left:308px;top:140px;width:1px;height:610px;background:#a0a0a0"></div>
<div class="ab" style="left:300px;top:419px;width:9px;height:52px;border:1px solid #a0a0a0;border-radius:2px;background:linear-gradient(#f6f6f6,#e6e6e6 50%,#d8d8d0)"></div>
<svg style="left:301px;top:437px" width="7" height="12" viewBox="0 0 7 12"><path d="M7 0V12L0 6Z" fill="#000080"/></svg>
<div class="ab" style="left:309px;top:140px;width:972px;height:1px;background:#a0a0a0"></div>
<div class="ab" style="left:309px;top:141px;width:954px;height:593px;background:#00009e"></div>
<div class="t" style="left:761px;top:143px;font-family:'Liberation Mono',monospace;font-size:11.67px;color:#c8c8f8">-(-,-)/-</div>
<div class="t" style="left:373px;top:158px;font-family:'Liberation Mono',monospace;font-size:11.67px;color:#c8c8f8">0</div>
<div class="t" style="left:422px;top:172px;font-family:'Liberation Mono',monospace;font-size:11.67px;color:#c8c8f8">16</div>
<div class="t" style="left:471px;top:158px;font-family:'Liberation Mono',monospace;font-size:11.67px;color:#c8c8f8">20</div>
<div class="t" style="left:520px;top:172px;font-family:'Liberation Mono',monospace;font-size:11.67px;color:#c8c8f8">24</div>
<div class="t" style="left:569px;top:158px;font-family:'Liberation Mono',monospace;font-size:11.67px;color:#c8c8f8">30</div>
<div class="t" style="left:618px;top:172px;font-family:'Liberation Mono',monospace;font-size:11.67px;color:#c8c8f8">48</div>
<div class="t" style="left:667px;top:158px;font-family:'Liberation Mono',monospace;font-size:11.67px;color:#c8c8f8">60</div>
<div class="t" style="left:716px;top:172px;font-family:'Liberation Mono',monospace;font-size:11.67px;color:#c8c8f8">80</div>
<div class="t" style="left:765px;top:158px;font-family:'Liberation Mono',monospace;font-size:11.67px;color:#c8c8f8">90</div>
<div class="t" style="left:814px;top:172px;font-family:'Liberation Mono',monospace;font-size:11.67px;color:#c8c8f8">105</div>
<div class="t" style="left:863px;top:158px;font-family:'Liberation Mono',monospace;font-size:11.67px;color:#c8c8f8">120</div>
<div class="t" style="left:912px;top:172px;font-family:'Liberation Mono',monospace;font-size:11.67px;color:#c8c8f8">135</div>
<div class="t" style="left:961px;top:158px;font-family:'Liberation Mono',monospace;font-size:11.67px;color:#c8c8f8">150</div>
<div class="t" style="left:1010px;top:172px;font-family:'Liberation Mono',monospace;font-size:11.67px;color:#c8c8f8">160</div>
<div class="t" style="left:1059px;top:158px;font-family:'Liberation Mono',monospace;font-size:11.67px;color:#c8c8f8">175</div>
<div class="t" style="left:1108px;top:172px;font-family:'Liberation Mono',monospace;font-size:11.67px;color:#c8c8f8">192</div>
<div class="t" style="left:1157px;top:158px;font-family:'Liberation Mono',monospace;font-size:11.67px;color:#c8c8f8">196</div>
<div class="ab" style="left:309px;top:189px;width:954px;height:3px;background:linear-gradient(#bcbcf6 33.3%,#00006a 33.3%,#00006a 66.6%,#bcbcf6 66.6%)"></div>
<div class="ab" style="left:361px;top:141px;width:3px;height:532px;background:linear-gradient(90deg,#bcbcf6 33.3%,#00006a 33.3%,#00006a 66.6%,#bcbcf6 66.6%)"></div>
<div class="ab" style="left:361px;top:189px;width:3px;height:3px;background:#bcbcf6"></div>
<div class="ab" style="left:362px;top:190px;width:1px;height:1px;background:#000050"></div>
<div class="ab" style="left:311px;top:177px;width:6px;height:1px;background:#c8c8f8"></div>
<div class="ab" style="left:346px;top:163px;width:6px;height:1px;background:#c8c8f8"></div>
<div class="ab" style="left:1157px;top:188px;width:42px;height:5px;background:linear-gradient(#e8e8f4 20%,#f0f040 20%,#f0f040 40%,#6a6a30 40%,#6a6a30 60%,#f0f040 60%,#f0f040 80%,#e8e8f4 80%)"></div>
<div class="ab" style="left:360px;top:659px;width:5px;height:14px;background:linear-gradient(90deg,#e8e8f4 20%,#f0f040 20%,#f0f040 40%,#6a6a30 40%,#6a6a30 60%,#f0f040 60%,#f0f040 80%,#e8e8f4 80%)"></div>
<div class="ab" style="left:372px;top:197px;width:834px;height:476px;background:#c0c0c0;border:1px solid #c8c8ee"></div>
<div class="ab" style="left:1214px;top:197px;width:49px;height:476px;background:#0000fc"></div>
<div class="t" style="right:937px;top:200px;font-family:'Liberation Mono',monospace;font-size:11.67px;color:#c8c8f8">-20</div><div class="t" style="right:867px;top:200px;font-family:'Liberation Mono',monospace;font-size:11.67px;color:#8080b0">0</div><div class="t" style="right:818px;top:200px;font-family:'Liberation Mono',monospace;font-size:11.67px;color:#8080b0">0</div><div class="t" style="right:769px;top:200px;font-family:'Liberation Mono',monospace;font-size:11.67px;color:#8080b0">0</div><div class="t" style="right:720px;top:200px;font-family:'Liberation Mono',monospace;font-size:11.67px;color:#8080b0">0</div><div class="t" style="right:671px;top:200px;font-family:'Liberation Mono',monospace;font-size:11.67px;color:#8080b0">0</div><div class="t" style="right:622px;top:200px;font-family:'Liberation Mono',monospace;font-size:11.67px;color:#8080b0">0</div><div class="t" style="right:573px;top:200px;font-family:'Liberation Mono',monospace;font-size:11.67px;color:#8080b0">0</div><div class="t" style="right:524px;top:200px;font-family:'Liberation Mono',monospace;font-size:11.67px;color:#8080b0">0</div><div class="t" style="right:475px;top:200px;font-family:'Liberation Mono',monospace;font-size:11.67px;color:#8080b0">0</div><div class="t" style="right:426px;top:200px;font-family:'Liberation Mono',monospace;font-size:11.67px;color:#8080b0">0</div><div class="t" style="right:377px;top:200px;font-family:'Liberation Mono',monospace;font-size:11.67px;color:#8080b0">0</div><div class="t" style="right:328px;top:200px;font-family:'Liberation Mono',monospace;font-size:11.67px;color:#8080b0">0</div><div class="t" style="right:279px;top:200px;font-family:'Liberation Mono',monospace;font-size:11.67px;color:#8080b0">0</div><div class="t" style="right:230px;top:200px;font-family:'Liberation Mono',monospace;font-size:11.67px;color:#8080b0">0</div><div class="t" style="right:181px;top:200px;font-family:'Liberation Mono',monospace;font-size:11.67px;color:#8080b0">0</div><div class="t" style="right:132px;top:200px;font-family:'Liberation Mono',monospace;font-size:11.67px;color:#8080b0">0</div><div class="t" style="right:83px;top:200px;font-family:'Liberation Mono',monospace;font-size:11.67px;color:#8080b0">0</div><div class="t" style="right:937px;top:214px;font-family:'Liberation Mono',monospace;font-size:11.67px;color:#c8c8f8">-5</div><div class="t" style="right:867px;top:214px;font-family:'Liberation Mono',monospace;font-size:11.67px;color:#8080b0">0</div><div class="t" style="right:818px;top:214px;font-family:'Liberation Mono',monospace;font-size:11.67px;color:#8080b0">0</div><div class="t" style="right:769px;top:214px;font-family:'Liberation Mono',monospace;font-size:11.67px;color:#8080b0">0</div><div class="t" style="right:720px;top:214px;font-family:'Liberation Mono',monospace;font-size:11.67px;color:#8080b0">0</div><div class="t" style="right:671px;top:214px;font-family:'Liberation Mono',monospace;font-size:11.67px;color:#8080b0">0</div><div class="t" style="right:622px;top:214px;font-family:'Liberation Mono',monospace;font-size:11.67px;color:#8080b0">0</div><div class="t" style="right:573px;top:214px;font-family:'Liberation Mono',monospace;font-size:11.67px;color:#8080b0">0</div><div class="t" style="right:524px;top:214px;font-family:'Liberation Mono',monospace;font-size:11.67px;color:#8080b0">0</div><div class="t" style="right:475px;top:214px;font-family:'Liberation Mono',monospace;font-size:11.67px;color:#8080b0">0</div><div class="t" style="right:426px;top:214px;font-family:'Liberation Mono',monospace;font-size:11.67px;color:#8080b0">0</div><div class="t" style="right:377px;top:214px;font-family:'Liberation Mono',monospace;font-size:11.67px;color:#8080b0">0</div><div class="t" style="right:328px;top:214px;font-family:'Liberation Mono',monospace;font-size:11.67px;color:#8080b0">0</div><div class="t" style="right:279px;top:214px;font-family:'Liberation Mono',monospace;font-size:11.67px;color:#8080b0">0</div><div class="t" style="right:230px;top:214px;font-family:'Liberation Mono',monospace;font-size:11.67px;color:#8080b0">0</div><div class="t" style="right:181px;top:214px;font-family:'Liberation Mono',monospace;font-size:11.67px;color:#8080b0">0</div><div class="t" style="right:132px;top:214px;font-family:'Liberation Mono',monospace;font-size:11.67px;color:#8080b0">0</div><div class="t" style="right:83px;top:214px;font-family:'Liberation Mono',monospace;font-size:11.67px;color:#8080b0">0</div><div class="t" style="right:937px;top:228px;font-family:'Liberation Mono',monospace;font-size:11.67px;color:#c8c8f8">-2</div><div class="t" style="right:867px;top:228px;font-family:'Liberation Mono',monospace;font-size:11.67px;color:#624e94">90</div><div class="t" style="right:818px;top:228px;font-family:'Liberation Mono',monospace;font-size:11.67px;color:#624e94">90</div><div class="t" style="right:769px;top:228px;font-family:'Liberation Mono',monospace;font-size:11.67px;color:#624e94">90</div><div class="t" style="right:720px;top:228px;font-family:'Liberation Mono',monospace;font-size:11.67px;color:#624e94">88</div><div class="t" style="right:671px;top:228px;font-family:'Liberation Mono',monospace;font-size:11.67px;color:#624e94">86</div><div class="t" style="right:622px;top:228px;font-family:'Liberation Mono',monospace;font-size:11.67px;color:#624e94">84</div><div class="t" style="right:573px;top:228px;font-family:'Liberation Mono',monospace;font-size:11.67px;color:#624e94">82</div><div class="t" style="right:524px;top:228px;font-family:'Liberation Mono',monospace;font-size:11.67px;color:#624e94">81</div><div class="t" style="right:475px;top:228px;font-family:'Liberation Mono',monospace;font-size:11.67px;color:#624e94">79</div><div class="t" style="right:426px;top:228px;font-family:'Liberation Mono',monospace;font-size:11.67px;color:#624e94">79</div><div class="t" style="right:377px;top:228px;font-family:'Liberation Mono',monospace;font-size:11.67px;color:#624e94">79</div><div class="t" style="right:328px;top:228px;font-family:'Liberation Mono',monospace;font-size:11.67px;color:#624e94">79</div><div class="t" style="right:279px;top:228px;font-family:'Liberation Mono',monospace;font-size:11.67px;color:#624e94">79</div><div class="t" style="right:230px;top:228px;font-family:'Liberation Mono',monospace;font-size:11.67px;color:#624e94">79</div><div class="t" style="right:181px;top:228px;font-family:'Liberation Mono',monospace;font-size:11.67px;color:#624e94">79</div><div class="t" style="right:132px;top:228px;font-family:'Liberation Mono',monospace;font-size:11.67px;color:#624e94">79</div><div class="t" style="right:83px;top:228px;font-family:'Liberation Mono',monospace;font-size:11.67px;color:#624e94">79</div><div class="t" style="right:937px;top:242px;font-family:'Liberation Mono',monospace;font-size:11.67px;color:#c8c8f8">0</div><div class="t" style="right:867px;top:242px;font-family:'Liberation Mono',monospace;font-size:11.67px;color:#624e94">280</div><div class="t" style="right:818px;top:242px;font-family:'Liberation Mono',monospace;font-size:11.67px;color:#624e94">280</div><div class="t" style="right:769px;top:242px;font-family:'Liberation Mono',monospace;font-size:11.67px;color:#624e94">270</div><div class="t" style="right:720px;top:242px;font-family:'Liberation Mono',monospace;font-size:11.67px;color:#624e94">267</div><div class="t" style="right:671px;top:242px;font-family:'Liberation Mono',monospace;font-size:11.67px;color:#624e94">232</div><div class="t" style="right:622px;top:242px;font-family:'Liberation Mono',monospace;font-size:11.67px;color:#624e94">212</div><div class="t" style="right:573px;top:242px;font-family:'Liberation Mono',monospace;font-size:11.67px;color:#624e94">199</div><div class="t" style="right:524px;top:242px;font-family:'Liberation Mono',monospace;font-size:11.67px;color:#624e94">190</div><div class="t" style="right:475px;top:242px;font-family:'Liberation Mono',monospace;font-size:11.67px;color:#624e94">185</div><div class="t" style="right:426px;top:242px;font-family:'Liberation Mono',monospace;font-size:11.67px;color:#624e94">165</div><div class="t" style="right:377px;top:242px;font-family:'Liberation Mono',monospace;font-size:11.67px;color:#624e94">143</div><div class="t" style="right:328px;top:242px;font-family:'Liberation Mono',monospace;font-size:11.67px;color:#624e94">132</div><div class="t" style="right:279px;top:242px;font-family:'Liberation Mono',monospace;font-size:11.67px;color:#624e94">122</div><div class="t" style="right:230px;top:242px;font-family:'Liberation Mono',monospace;font-size:11.67px;color:#624e94">116</div><div class="t" style="right:181px;top:242px;font-family:'Liberation Mono',monospace;font-size:11.67px;color:#624e94">109</div><div class="t" style="right:132px;top:242px;font-family:'Liberation Mono',monospace;font-size:11.67px;color:#624e94">100</div><div class="t" style="right:83px;top:242px;font-family:'Liberation Mono',monospace;font-size:11.67px;color:#624e94">98</div><div class="t" style="right:937px;top:256px;font-family:'Liberation Mono',monospace;font-size:11.67px;color:#c8c8f8">1</div><div class="t" style="right:867px;top:256px;font-family:'Liberation Mono',monospace;font-size:11.67px;color:#624e94">378</div><div class="t" style="right:818px;top:256px;font-family:'Liberation Mono',monospace;font-size:11.67px;color:#624e94">378</div><div class="t" style="right:769px;top:256px;font-family:'Liberation Mono',monospace;font-size:11.67px;color:#624e94">367</div><div class="t" style="right:720px;top:256px;font-family:'Liberation Mono',monospace;font-size:11.67px;color:#624e94">289</div><div class="t" style="right:671px;top:256px;font-family:'Liberation Mono',monospace;font-size:11.67px;color:#624e94">253</div><div class="t" style="right:622px;top:256px;font-family:'Liberation Mono',monospace;font-size:11.67px;color:#624e94">234</div><div class="t" style="right:573px;top:256px;font-family:'Liberation Mono',monospace;font-size:11.67px;color:#624e94">221</div><div class="t" style="right:524px;top:256px;font-family:'Liberation Mono',monospace;font-size:11.67px;color:#624e94">211</div><div class="t" style="right:475px;top:256px;font-family:'Liberation Mono',monospace;font-size:11.67px;color:#624e94">207</div><div class="t" style="right:426px;top:256px;font-family:'Liberation Mono',monospace;font-size:11.67px;color:#624e94">186</div><div class="t" style="right:377px;top:256px;font-family:'Liberation Mono',monospace;font-size:11.67px;color:#624e94">165</div><div class="t" style="right:328px;top:256px;font-family:'Liberation Mono',monospace;font-size:11.67px;color:#624e94">154</div><div class="t" style="right:279px;top:256px;font-family:'Liberation Mono',monospace;font-size:11.67px;color:#624e94">143</div><div class="t" style="right:230px;top:256px;font-family:'Liberation Mono',monospace;font-size:11.67px;color:#624e94">138</div><div class="t" style="right:181px;top:256px;font-family:'Liberation Mono',monospace;font-size:11.67px;color:#624e94">130</div><div class="t" style="right:132px;top:256px;font-family:'Liberation Mono',monospace;font-size:11.67px;color:#624e94">122</div><div class="t" style="right:83px;top:256px;font-family:'Liberation Mono',monospace;font-size:11.67px;color:#624e94">119</div><div class="t" style="right:937px;top:270px;font-family:'Liberation Mono',monospace;font-size:11.67px;color:#c8c8f8">1</div><div class="t" style="right:867px;top:270px;font-family:'Liberation Mono',monospace;font-size:11.67px;color:#624e94">496</div><div class="t" style="right:818px;top:270px;font-family:'Liberation Mono',monospace;font-size:11.67px;color:#624e94">475</div><div class="t" style="right:769px;top:270px;font-family:'Liberation Mono',monospace;font-size:11.67px;color:#624e94">464</div><div class="t" style="right:720px;top:270px;font-family:'Liberation Mono',monospace;font-size:11.67px;color:#624e94">397</div><div class="t" style="right:671px;top:270px;font-family:'Liberation Mono',monospace;font-size:11.67px;color:#624e94">314</div><div class="t" style="right:622px;top:270px;font-family:'Liberation Mono',monospace;font-size:11.67px;color:#624e94">268</div><div class="t" style="right:573px;top:270px;font-family:'Liberation Mono',monospace;font-size:11.67px;color:#624e94">238</div><div class="t" style="right:524px;top:270px;font-family:'Liberation Mono',monospace;font-size:11.67px;color:#624e94">233</div><div class="t" style="right:475px;top:270px;font-family:'Liberation Mono',monospace;font-size:11.67px;color:#624e94">230</div><div class="t" style="right:426px;top:270px;font-family:'Liberation Mono',monospace;font-size:11.67px;color:#624e94">213</div><div class="t" style="right:377px;top:270px;font-family:'Liberation Mono',monospace;font-size:11.67px;color:#624e94">196</div><div class="t" style="right:328px;top:270px;font-family:'Liberation Mono',monospace;font-size:11.67px;color:#624e94">186</div><div class="t" style="right:279px;top:270px;font-family:'Liberation Mono',monospace;font-size:11.67px;color:#624e94">176</div><div class="t" style="right:230px;top:270px;font-family:'Liberation Mono',monospace;font-size:11.67px;color:#624e94">168</div><div class="t" style="right:181px;top:270px;font-family:'Liberation Mono',monospace;font-size:11.67px;color:#624e94">157</div><div class="t" style="right:132px;top:270px;font-family:'Liberation Mono',monospace;font-size:11.67px;color:#624e94">144</div><div class="t" style="right:83px;top:270px;font-family:'Liberation Mono',monospace;font-size:11.67px;color:#624e94">142</div><div class="t" style="right:937px;top:284px;font-family:'Liberation Mono',monospace;font-size:11.67px;color:#c8c8f8">2</div><div class="t" style="right:867px;top:284px;font-family:'Liberation Mono',monospace;font-size:11.67px;color:#624e94">561</div><div class="t" style="right:818px;top:284px;font-family:'Liberation Mono',monospace;font-size:11.67px;color:#624e94">523</div><div class="t" style="right:769px;top:284px;font-family:'Liberation Mono',monospace;font-size:11.67px;color:#624e94">513</div><div class="t" style="right:720px;top:284px;font-family:'Liberation Mono',monospace;font-size:11.67px;color:#624e94">462</div><div class="t" style="right:671px;top:284px;font-family:'Liberation Mono',monospace;font-size:11.67px;color:#624e94">402</div><div class="t" style="right:622px;top:284px;font-family:'Liberation Mono',monospace;font-size:11.67px;color:#624e94">317</div><div class="t" style="right:573px;top:284px;font-family:'Liberation Mono',monospace;font-size:11.67px;color:#624e94">261</div><div class="t" style="right:524px;top:284px;font-family:'Liberation Mono',monospace;font-size:11.67px;color:#624e94">247</div><div class="t" style="right:475px;top:284px;font-family:'Liberation Mono',monospace;font-size:11.67px;color:#624e94">240</div><div class="t" style="right:426px;top:284px;font-family:'Liberation Mono',monospace;font-size:11.67px;color:#624e94">226</div><div class="t" style="right:377px;top:284px;font-family:'Liberation Mono',monospace;font-size:11.67px;color:#624e94">211</div><div class="t" style="right:328px;top:284px;font-family:'Liberation Mono',monospace;font-size:11.67px;color:#624e94">203</div><div class="t" style="right:279px;top:284px;font-family:'Liberation Mono',monospace;font-size:11.67px;color:#624e94">194</div><div class="t" style="right:230px;top:284px;font-family:'Liberation Mono',monospace;font-size:11.67px;color:#624e94">194</div><div class="t" style="right:181px;top:284px;font-family:'Liberation Mono',monospace;font-size:11.67px;color:#624e94">194</div><div class="t" style="right:132px;top:284px;font-family:'Liberation Mono',monospace;font-size:11.67px;color:#624e94">194</div><div class="t" style="right:83px;top:284px;font-family:'Liberation Mono',monospace;font-size:11.67px;color:#624e94">192</div><div class="t" style="right:937px;top:298px;font-family:'Liberation Mono',monospace;font-size:11.67px;color:#c8c8f8">2</div><div class="t" style="right:867px;top:298px;font-family:'Liberation Mono',monospace;font-size:11.67px;color:#624e94">761</div><div class="t" style="right:818px;top:298px;font-family:'Liberation Mono',monospace;font-size:11.67px;color:#624e94">625</div><div class="t" style="right:769px;top:298px;font-family:'Liberation Mono',monospace;font-size:11.67px;color:#624e94">588</div><div class="t" style="right:720px;top:298px;font-family:'Liberation Mono',monospace;font-size:11.67px;color:#624e94">486</div><div class="t" style="right:671px;top:298px;font-family:'Liberation Mono',monospace;font-size:11.67px;color:#624e94">446</div><div class="t" style="right:622px;top:298px;font-family:'Liberation Mono',monospace;font-size:11.67px;color:#624e94">382</div><div class="t" style="right:573px;top:298px;font-family:'Liberation Mono',monospace;font-size:11.67px;color:#624e94">340</div><div class="t" style="right:524px;top:298px;font-family:'Liberation Mono',monospace;font-size:11.67px;color:#624e94">287</div><div class="t" style="right:475px;top:298px;font-family:'Liberation Mono',monospace;font-size:11.67px;color:#624e94">260</div><div class="t" style="right:426px;top:298px;font-family:'Liberation Mono',monospace;font-size:11.67px;color:#624e94">244</div><div class="t" style="right:377px;top:298px;font-family:'Liberation Mono',monospace;font-size:11.67px;color:#624e94">227</div><div class="t" style="right:328px;top:298px;font-family:'Liberation Mono',monospace;font-size:11.67px;color:#624e94">254</div><div class="t" style="right:279px;top:298px;font-family:'Liberation Mono',monospace;font-size:11.67px;color:#624e94">280</div><div class="t" style="right:230px;top:298px;font-family:'Liberation Mono',monospace;font-size:11.67px;color:#624e94">281</div><div class="t" style="right:181px;top:298px;font-family:'Liberation Mono',monospace;font-size:11.67px;color:#624e94">282</div><div class="t" style="right:132px;top:298px;font-family:'Liberation Mono',monospace;font-size:11.67px;color:#624e94">270</div><div class="t" style="right:83px;top:298px;font-family:'Liberation Mono',monospace;font-size:11.67px;color:#624e94">267</div><div class="t" style="right:937px;top:312px;font-family:'Liberation Mono',monospace;font-size:11.67px;color:#c8c8f8">4</div><div class="t" style="right:867px;top:312px;font-family:'Liberation Mono',monospace;font-size:11.67px;color:#624e94">1182</div><div class="t" style="right:818px;top:312px;font-family:'Liberation Mono',monospace;font-size:11.67px;color:#624e94">912</div><div class="t" style="right:769px;top:312px;font-family:'Liberation Mono',monospace;font-size:11.67px;color:#624e94">831</div><div class="t" style="right:720px;top:312px;font-family:'Liberation Mono',monospace;font-size:11.67px;color:#624e94">659</div><div class="t" style="right:671px;top:312px;font-family:'Liberation Mono',monospace;font-size:11.67px;color:#624e94">577</div><div class="t" style="right:622px;top:312px;font-family:'Liberation Mono',monospace;font-size:11.67px;color:#624e94">478</div><div class="t" style="right:573px;top:312px;font-family:'Liberation Mono',monospace;font-size:11.67px;color:#624e94">412</div><div class="t" style="right:524px;top:312px;font-family:'Liberation Mono',monospace;font-size:11.67px;color:#624e94">389</div><div class="t" style="right:475px;top:312px;font-family:'Liberation Mono',monospace;font-size:11.67px;color:#624e94">378</div><div class="t" style="right:426px;top:312px;font-family:'Liberation Mono',monospace;font-size:11.67px;color:#624e94">359</div><div class="t" style="right:377px;top:312px;font-family:'Liberation Mono',monospace;font-size:11.67px;color:#624e94">340</div><div class="t" style="right:328px;top:312px;font-family:'Liberation Mono',monospace;font-size:11.67px;color:#624e94">333</div><div class="t" style="right:279px;top:312px;font-family:'Liberation Mono',monospace;font-size:11.67px;color:#624e94">326</div><div class="t" style="right:230px;top:312px;font-family:'Liberation Mono',monospace;font-size:11.67px;color:#624e94">321</div><div class="t" style="right:181px;top:312px;font-family:'Liberation Mono',monospace;font-size:11.67px;color:#624e94">314</div><div class="t" style="right:132px;top:312px;font-family:'Liberation Mono',monospace;font-size:11.67px;color:#624e94">306</div><div class="t" style="right:83px;top:312px;font-family:'Liberation Mono',monospace;font-size:11.67px;color:#624e94">304</div><div class="t" style="right:937px;top:326px;font-family:'Liberation Mono',monospace;font-size:11.67px;color:#c8c8f8">6</div><div class="t" style="right:867px;top:326px;font-family:'Liberation Mono',monospace;font-size:11.67px;color:#624e94">1371</div><div class="t" style="right:818px;top:326px;font-family:'Liberation Mono',monospace;font-size:11.67px;color:#624e94">1088</div><div class="t" style="right:769px;top:326px;font-family:'Liberation Mono',monospace;font-size:11.67px;color:#624e94">987</div><div class="t" style="right:720px;top:326px;font-family:'Liberation Mono',monospace;font-size:11.67px;color:#624e94">765</div><div class="t" style="right:671px;top:326px;font-family:'Liberation Mono',monospace;font-size:11.67px;color:#624e94">665</div><div class="t" style="right:622px;top:326px;font-family:'Liberation Mono',monospace;font-size:11.67px;color:#624e94">546</div><div class="t" style="right:573px;top:326px;font-family:'Liberation Mono',monospace;font-size:11.67px;color:#624e94">467</div><div class="t" style="right:524px;top:326px;font-family:'Liberation Mono',monospace;font-size:11.67px;color:#624e94">433</div><div class="t" style="right:475px;top:326px;font-family:'Liberation Mono',monospace;font-size:11.67px;color:#624e94">415</div><div class="t" style="right:426px;top:326px;font-family:'Liberation Mono',monospace;font-size:11.67px;color:#624e94">397</div><div class="t" style="right:377px;top:326px;font-family:'Liberation Mono',monospace;font-size:11.67px;color:#624e94">378</div><div class="t" style="right:328px;top:326px;font-family:'Liberation Mono',monospace;font-size:11.67px;color:#624e94">368</div><div class="t" style="right:279px;top:326px;font-family:'Liberation Mono',monospace;font-size:11.67px;color:#624e94">357</div><div class="t" style="right:230px;top:326px;font-family:'Liberation Mono',monospace;font-size:11.67px;color:#624e94">353</div><div class="t" style="right:181px;top:326px;font-family:'Liberation Mono',monospace;font-size:11.67px;color:#624e94">345</div><div class="t" style="right:132px;top:326px;font-family:'Liberation Mono',monospace;font-size:11.67px;color:#624e94">336</div><div class="t" style="right:83px;top:326px;font-family:'Liberation Mono',monospace;font-size:11.67px;color:#624e94">334</div><div class="t" style="right:937px;top:340px;font-family:'Liberation Mono',monospace;font-size:11.67px;color:#c8c8f8">8</div><div class="t" style="right:867px;top:340px;font-family:'Liberation Mono',monospace;font-size:11.67px;color:#624e94">1436</div><div class="t" style="right:818px;top:340px;font-family:'Liberation Mono',monospace;font-size:11.67px;color:#624e94">1158</div><div class="t" style="right:769px;top:340px;font-family:'Liberation Mono',monospace;font-size:11.67px;color:#624e94">1064</div><div class="t" style="right:720px;top:340px;font-family:'Liberation Mono',monospace;font-size:11.67px;color:#624e94">871</div><div class="t" style="right:671px;top:340px;font-family:'Liberation Mono',monospace;font-size:11.67px;color:#624e94">752</div><div class="t" style="right:622px;top:340px;font-family:'Liberation Mono',monospace;font-size:11.67px;color:#624e94">614</div><div class="t" style="right:573px;top:340px;font-family:'Liberation Mono',monospace;font-size:11.67px;color:#624e94">522</div><div class="t" style="right:524px;top:340px;font-family:'Liberation Mono',monospace;font-size:11.67px;color:#624e94">476</div><div class="t" style="right:475px;top:340px;font-family:'Liberation Mono',monospace;font-size:11.67px;color:#624e94">453</div><div class="t" style="right:426px;top:340px;font-family:'Liberation Mono',monospace;font-size:11.67px;color:#624e94">435</div><div class="t" style="right:377px;top:340px;font-family:'Liberation Mono',monospace;font-size:11.67px;color:#624e94">416</div><div class="t" style="right:328px;top:340px;font-family:'Liberation Mono',monospace;font-size:11.67px;color:#624e94">402</div><div class="t" style="right:279px;top:340px;font-family:'Liberation Mono',monospace;font-size:11.67px;color:#624e94">388</div><div class="t" style="right:230px;top:340px;font-family:'Liberation Mono',monospace;font-size:11.67px;color:#624e94">384</div><div class="t" style="right:181px;top:340px;font-family:'Liberation Mono',monospace;font-size:11.67px;color:#624e94">378</div><div class="t" style="right:132px;top:340px;font-family:'Liberation Mono',monospace;font-size:11.67px;color:#624e94">370</div><div class="t" style="right:83px;top:340px;font-family:'Liberation Mono',monospace;font-size:11.67px;color:#624e94">368</div><div class="t" style="right:937px;top:354px;font-family:'Liberation Mono',monospace;font-size:11.67px;color:#c8c8f8">10</div><div class="t" style="right:867px;top:354px;font-family:'Liberation Mono',monospace;font-size:11.67px;color:#624e94">1517</div><div class="t" style="right:818px;top:354px;font-family:'Liberation Mono',monospace;font-size:11.67px;color:#624e94">1237</div><div class="t" style="right:769px;top:354px;font-family:'Liberation Mono',monospace;font-size:11.67px;color:#624e94">1142</div><div class="t" style="right:720px;top:354px;font-family:'Liberation Mono',monospace;font-size:11.67px;color:#624e94">977</div><div class="t" style="right:671px;top:354px;font-family:'Liberation Mono',monospace;font-size:11.67px;color:#624e94">840</div><div class="t" style="right:622px;top:354px;font-family:'Liberation Mono',monospace;font-size:11.67px;color:#624e94">635</div><div class="t" style="right:573px;top:354px;font-family:'Liberation Mono',monospace;font-size:11.67px;color:#624e94">576</div><div class="t" style="right:524px;top:354px;font-family:'Liberation Mono',monospace;font-size:11.67px;color:#624e94">519</div><div class="t" style="right:475px;top:354px;font-family:'Liberation Mono',monospace;font-size:11.67px;color:#624e94">490</div><div class="t" style="right:426px;top:354px;font-family:'Liberation Mono',monospace;font-size:11.67px;color:#624e94">473</div><div class="t" style="right:377px;top:354px;font-family:'Liberation Mono',monospace;font-size:11.67px;color:#624e94">454</div><div class="t" style="right:328px;top:354px;font-family:'Liberation Mono',monospace;font-size:11.67px;color:#624e94">437</div><div class="t" style="right:279px;top:354px;font-family:'Liberation Mono',monospace;font-size:11.67px;color:#624e94">420</div><div class="t" style="right:230px;top:354px;font-family:'Liberation Mono',monospace;font-size:11.67px;color:#624e94">415</div><div class="t" style="right:181px;top:354px;font-family:'Liberation Mono',monospace;font-size:11.67px;color:#624e94">409</div><div class="t" style="right:132px;top:354px;font-family:'Liberation Mono',monospace;font-size:11.67px;color:#624e94">401</div><div class="t" style="right:83px;top:354px;font-family:'Liberation Mono',monospace;font-size:11.67px;color:#624e94">399</div><div class="t" style="right:937px;top:368px;font-family:'Liberation Mono',monospace;font-size:11.67px;color:#c8c8f8">13</div><div class="t" style="right:867px;top:368px;font-family:'Liberation Mono',monospace;font-size:11.67px;color:#624e94">1635</div><div class="t" style="right:818px;top:368px;font-family:'Liberation Mono',monospace;font-size:11.67px;color:#624e94">1350</div><div class="t" style="right:769px;top:368px;font-family:'Liberation Mono',monospace;font-size:11.67px;color:#624e94">1247</div><div class="t" style="right:720px;top:368px;font-family:'Liberation Mono',monospace;font-size:11.67px;color:#624e94">1063</div><div class="t" style="right:671px;top:368px;font-family:'Liberation Mono',monospace;font-size:11.67px;color:#624e94">911</div><div class="t" style="right:622px;top:368px;font-family:'Liberation Mono',monospace;font-size:11.67px;color:#624e94">692</div><div class="t" style="right:573px;top:368px;font-family:'Liberation Mono',monospace;font-size:11.67px;color:#624e94">627</div><div class="t" style="right:524px;top:368px;font-family:'Liberation Mono',monospace;font-size:11.67px;color:#624e94">559</div><div class="t" style="right:475px;top:368px;font-family:'Liberation Mono',monospace;font-size:11.67px;color:#624e94">524</div><div class="t" style="right:426px;top:368px;font-family:'Liberation Mono',monospace;font-size:11.67px;color:#624e94">504</div><div class="t" style="right:377px;top:368px;font-family:'Liberation Mono',monospace;font-size:11.67px;color:#624e94">482</div><div class="t" style="right:328px;top:368px;font-family:'Liberation Mono',monospace;font-size:11.67px;color:#624e94">464</div><div class="t" style="right:279px;top:368px;font-family:'Liberation Mono',monospace;font-size:11.67px;color:#624e94">446</div><div class="t" style="right:230px;top:368px;font-family:'Liberation Mono',monospace;font-size:11.67px;color:#624e94">442</div><div class="t" style="right:181px;top:368px;font-family:'Liberation Mono',monospace;font-size:11.67px;color:#624e94">438</div><div class="t" style="right:132px;top:368px;font-family:'Liberation Mono',monospace;font-size:11.67px;color:#624e94">421</div><div class="t" style="right:83px;top:368px;font-family:'Liberation Mono',monospace;font-size:11.67px;color:#624e94">419</div><div class="t" style="right:937px;top:382px;font-family:'Liberation Mono',monospace;font-size:11.67px;color:#c8c8f8">15</div><div class="t" style="right:867px;top:382px;font-family:'Liberation Mono',monospace;font-size:11.67px;color:#624e94">1751</div><div class="t" style="right:818px;top:382px;font-family:'Liberation Mono',monospace;font-size:11.67px;color:#624e94">1462</div><div class="t" style="right:769px;top:382px;font-family:'Liberation Mono',monospace;font-size:11.67px;color:#624e94">1352</div><div class="t" style="right:720px;top:382px;font-family:'Liberation Mono',monospace;font-size:11.67px;color:#624e94">1149</div><div class="t" style="right:671px;top:382px;font-family:'Liberation Mono',monospace;font-size:11.67px;color:#624e94">982</div><div class="t" style="right:622px;top:382px;font-family:'Liberation Mono',monospace;font-size:11.67px;color:#624e94">748</div><div class="t" style="right:573px;top:382px;font-family:'Liberation Mono',monospace;font-size:11.67px;color:#624e94">677</div><div class="t" style="right:524px;top:382px;font-family:'Liberation Mono',monospace;font-size:11.67px;color:#624e94">598</div><div class="t" style="right:475px;top:382px;font-family:'Liberation Mono',monospace;font-size:11.67px;color:#624e94">559</div><div class="t" style="right:426px;top:382px;font-family:'Liberation Mono',monospace;font-size:11.67px;color:#624e94">535</div><div class="t" style="right:377px;top:382px;font-family:'Liberation Mono',monospace;font-size:11.67px;color:#624e94">510</div><div class="t" style="right:328px;top:382px;font-family:'Liberation Mono',monospace;font-size:11.67px;color:#624e94">491</div><div class="t" style="right:279px;top:382px;font-family:'Liberation Mono',monospace;font-size:11.67px;color:#624e94">470</div><div class="t" style="right:230px;top:382px;font-family:'Liberation Mono',monospace;font-size:11.67px;color:#624e94">468</div><div class="t" style="right:181px;top:382px;font-family:'Liberation Mono',monospace;font-size:11.67px;color:#624e94">466</div><div class="t" style="right:132px;top:382px;font-family:'Liberation Mono',monospace;font-size:11.67px;color:#624e94">442</div><div class="t" style="right:83px;top:382px;font-family:'Liberation Mono',monospace;font-size:11.67px;color:#624e94">440</div><div class="t" style="right:937px;top:396px;font-family:'Liberation Mono',monospace;font-size:11.67px;color:#c8c8f8">18</div><div class="t" style="right:867px;top:396px;font-family:'Liberation Mono',monospace;font-size:11.67px;color:#624e94">1853</div><div class="t" style="right:818px;top:396px;font-family:'Liberation Mono',monospace;font-size:11.67px;color:#624e94">1562</div><div class="t" style="right:769px;top:396px;font-family:'Liberation Mono',monospace;font-size:11.67px;color:#624e94">1451</div><div class="t" style="right:720px;top:396px;font-family:'Liberation Mono',monospace;font-size:11.67px;color:#624e94">1222</div><div class="t" style="right:671px;top:396px;font-family:'Liberation Mono',monospace;font-size:11.67px;color:#624e94">1044</div><div class="t" style="right:622px;top:396px;font-family:'Liberation Mono',monospace;font-size:11.67px;color:#624e94">799</div><div class="t" style="right:573px;top:396px;font-family:'Liberation Mono',monospace;font-size:11.67px;color:#624e94">718</div><div class="t" style="right:524px;top:396px;font-family:'Liberation Mono',monospace;font-size:11.67px;color:#624e94">633</div><div class="t" style="right:475px;top:396px;font-family:'Liberation Mono',monospace;font-size:11.67px;color:#624e94">591</div><div class="t" style="right:426px;top:396px;font-family:'Liberation Mono',monospace;font-size:11.67px;color:#624e94">563</div><div class="t" style="right:377px;top:396px;font-family:'Liberation Mono',monospace;font-size:11.67px;color:#624e94">534</div><div class="t" style="right:328px;top:396px;font-family:'Liberation Mono',monospace;font-size:11.67px;color:#624e94">511</div><div class="t" style="right:279px;top:396px;font-family:'Liberation Mono',monospace;font-size:11.67px;color:#624e94">488</div><div class="t" style="right:230px;top:396px;font-family:'Liberation Mono',monospace;font-size:11.67px;color:#624e94">483</div><div class="t" style="right:181px;top:396px;font-family:'Liberation Mono',monospace;font-size:11.67px;color:#624e94">478</div><div class="t" style="right:132px;top:396px;font-family:'Liberation Mono',monospace;font-size:11.67px;color:#624e94">464</div><div class="t" style="right:83px;top:396px;font-family:'Liberation Mono',monospace;font-size:11.67px;color:#624e94">462</div><div class="t" style="right:937px;top:410px;font-family:'Liberation Mono',monospace;font-size:11.67px;color:#c8c8f8">20</div><div class="t" style="right:867px;top:410px;font-family:'Liberation Mono',monospace;font-size:11.67px;color:#624e94">1954</div><div class="t" style="right:818px;top:410px;font-family:'Liberation Mono',monospace;font-size:11.67px;color:#624e94">1663</div><div class="t" style="right:769px;top:410px;font-family:'Liberation Mono',monospace;font-size:11.67px;color:#624e94">1549</div><div class="t" style="right:720px;top:410px;font-family:'Liberation Mono',monospace;font-size:11.67px;color:#624e94">1294</div><div class="t" style="right:671px;top:410px;font-family:'Liberation Mono',monospace;font-size:11.67px;color:#624e94">1105</div><div class="t" style="right:622px;top:410px;font-family:'Liberation Mono',monospace;font-size:11.67px;color:#624e94">849</div><div class="t" style="right:573px;top:410px;font-family:'Liberation Mono',monospace;font-size:11.67px;color:#624e94">758</div><div class="t" style="right:524px;top:410px;font-family:'Liberation Mono',monospace;font-size:11.67px;color:#624e94">668</div><div class="t" style="right:475px;top:410px;font-family:'Liberation Mono',monospace;font-size:11.67px;color:#624e94">624</div><div class="t" style="right:426px;top:410px;font-family:'Liberation Mono',monospace;font-size:11.67px;color:#624e94">590</div><div class="t" style="right:377px;top:410px;font-family:'Liberation Mono',monospace;font-size:11.67px;color:#624e94">557</div><div class="t" style="right:328px;top:410px;font-family:'Liberation Mono',monospace;font-size:11.67px;color:#624e94">531</div><div class="t" style="right:279px;top:410px;font-family:'Liberation Mono',monospace;font-size:11.67px;color:#624e94">505</div><div class="t" style="right:230px;top:410px;font-family:'Liberation Mono',monospace;font-size:11.67px;color:#624e94">498</div><div class="t" style="right:181px;top:410px;font-family:'Liberation Mono',monospace;font-size:11.67px;color:#624e94">489</div><div class="t" style="right:132px;top:410px;font-family:'Liberation Mono',monospace;font-size:11.67px;color:#624e94">478</div><div class="t" style="right:83px;top:410px;font-family:'Liberation Mono',monospace;font-size:11.67px;color:#624e94">476</div><div class="t" style="right:937px;top:424px;font-family:'Liberation Mono',monospace;font-size:11.67px;color:#c8c8f8">23</div><div class="t" style="right:867px;top:424px;font-family:'Liberation Mono',monospace;font-size:11.67px;color:#624e94">2068</div><div class="t" style="right:818px;top:424px;font-family:'Liberation Mono',monospace;font-size:11.67px;color:#624e94">1771</div><div class="t" style="right:769px;top:424px;font-family:'Liberation Mono',monospace;font-size:11.67px;color:#624e94">1650</div><div class="t" style="right:720px;top:424px;font-family:'Liberation Mono',monospace;font-size:11.67px;color:#624e94">1373</div><div class="t" style="right:671px;top:424px;font-family:'Liberation Mono',monospace;font-size:11.67px;color:#624e94">1183</div><div class="t" style="right:622px;top:424px;font-family:'Liberation Mono',monospace;font-size:11.67px;color:#624e94">895</div><div class="t" style="right:573px;top:424px;font-family:'Liberation Mono',monospace;font-size:11.67px;color:#624e94">793</div><div class="t" style="right:524px;top:424px;font-family:'Liberation Mono',monospace;font-size:11.67px;color:#624e94">699</div><div class="t" style="right:475px;top:424px;font-family:'Liberation Mono',monospace;font-size:11.67px;color:#624e94">653</div><div class="t" style="right:426px;top:424px;font-family:'Liberation Mono',monospace;font-size:11.67px;color:#624e94">617</div><div class="t" style="right:377px;top:424px;font-family:'Liberation Mono',monospace;font-size:11.67px;color:#624e94">581</div><div class="t" style="right:328px;top:424px;font-family:'Liberation Mono',monospace;font-size:11.67px;color:#624e94">552</div><div class="t" style="right:279px;top:424px;font-family:'Liberation Mono',monospace;font-size:11.67px;color:#624e94">523</div><div class="t" style="right:230px;top:424px;font-family:'Liberation Mono',monospace;font-size:11.67px;color:#624e94">516</div><div class="t" style="right:181px;top:424px;font-family:'Liberation Mono',monospace;font-size:11.67px;color:#624e94">505</div><div class="t" style="right:132px;top:424px;font-family:'Liberation Mono',monospace;font-size:11.67px;color:#624e94">492</div><div class="t" style="right:83px;top:424px;font-family:'Liberation Mono',monospace;font-size:11.67px;color:#624e94">490</div><div class="t" style="right:937px;top:438px;font-family:'Liberation Mono',monospace;font-size:11.67px;color:#c8c8f8">25</div><div class="t" style="right:867px;top:438px;font-family:'Liberation Mono',monospace;font-size:11.67px;color:#624e94">2149</div><div class="t" style="right:818px;top:438px;font-family:'Liberation Mono',monospace;font-size:11.67px;color:#624e94">1879</div><div class="t" style="right:769px;top:438px;font-family:'Liberation Mono',monospace;font-size:11.67px;color:#624e94">1749</div><div class="t" style="right:720px;top:438px;font-family:'Liberation Mono',monospace;font-size:11.67px;color:#624e94">1453</div><div class="t" style="right:671px;top:438px;font-family:'Liberation Mono',monospace;font-size:11.67px;color:#624e94">1261</div><div class="t" style="right:622px;top:438px;font-family:'Liberation Mono',monospace;font-size:11.67px;color:#624e94">940</div><div class="t" style="right:573px;top:438px;font-family:'Liberation Mono',monospace;font-size:11.67px;color:#624e94">829</div><div class="t" style="right:524px;top:438px;font-family:'Liberation Mono',monospace;font-size:11.67px;color:#624e94">731</div><div class="t" style="right:475px;top:438px;font-family:'Liberation Mono',monospace;font-size:11.67px;color:#624e94">681</div><div class="t" style="right:426px;top:438px;font-family:'Liberation Mono',monospace;font-size:11.67px;color:#624e94">642</div><div class="t" style="right:377px;top:438px;font-family:'Liberation Mono',monospace;font-size:11.67px;color:#624e94">603</div><div class="t" style="right:328px;top:438px;font-family:'Liberation Mono',monospace;font-size:11.67px;color:#624e94">573</div><div class="t" style="right:279px;top:438px;font-family:'Liberation Mono',monospace;font-size:11.67px;color:#624e94">542</div><div class="t" style="right:230px;top:438px;font-family:'Liberation Mono',monospace;font-size:11.67px;color:#624e94">533</div><div class="t" style="right:181px;top:438px;font-family:'Liberation Mono',monospace;font-size:11.67px;color:#624e94">521</div><div class="t" style="right:132px;top:438px;font-family:'Liberation Mono',monospace;font-size:11.67px;color:#624e94">506</div><div class="t" style="right:83px;top:438px;font-family:'Liberation Mono',monospace;font-size:11.67px;color:#624e94">504</div><div class="t" style="right:937px;top:452px;font-family:'Liberation Mono',monospace;font-size:11.67px;color:#c8c8f8">28</div><div class="t" style="right:867px;top:452px;font-family:'Liberation Mono',monospace;font-size:11.67px;color:#624e94">2235</div><div class="t" style="right:818px;top:452px;font-family:'Liberation Mono',monospace;font-size:11.67px;color:#624e94">1955</div><div class="t" style="right:769px;top:452px;font-family:'Liberation Mono',monospace;font-size:11.67px;color:#624e94">1828</div><div class="t" style="right:720px;top:452px;font-family:'Liberation Mono',monospace;font-size:11.67px;color:#624e94">1532</div><div class="t" style="right:671px;top:452px;font-family:'Liberation Mono',monospace;font-size:11.67px;color:#624e94">1339</div><div class="t" style="right:622px;top:452px;font-family:'Liberation Mono',monospace;font-size:11.67px;color:#624e94">986</div><div class="t" style="right:573px;top:452px;font-family:'Liberation Mono',monospace;font-size:11.67px;color:#624e94">865</div><div class="t" style="right:524px;top:452px;font-family:'Liberation Mono',monospace;font-size:11.67px;color:#624e94">762</div><div class="t" style="right:475px;top:452px;font-family:'Liberation Mono',monospace;font-size:11.67px;color:#624e94">710</div><div class="t" style="right:426px;top:452px;font-family:'Liberation Mono',monospace;font-size:11.67px;color:#624e94">669</div><div class="t" style="right:377px;top:452px;font-family:'Liberation Mono',monospace;font-size:11.67px;color:#624e94">627</div><div class="t" style="right:328px;top:452px;font-family:'Liberation Mono',monospace;font-size:11.67px;color:#624e94">594</div><div class="t" style="right:279px;top:452px;font-family:'Liberation Mono',monospace;font-size:11.67px;color:#624e94">560</div><div class="t" style="right:230px;top:452px;font-family:'Liberation Mono',monospace;font-size:11.67px;color:#624e94">551</div><div class="t" style="right:181px;top:452px;font-family:'Liberation Mono',monospace;font-size:11.67px;color:#624e94">537</div><div class="t" style="right:132px;top:452px;font-family:'Liberation Mono',monospace;font-size:11.67px;color:#624e94">522</div><div class="t" style="right:83px;top:452px;font-family:'Liberation Mono',monospace;font-size:11.67px;color:#624e94">520</div><div class="t" style="right:937px;top:466px;font-family:'Liberation Mono',monospace;font-size:11.67px;color:#c8c8f8">30</div><div class="t" style="right:867px;top:466px;font-family:'Liberation Mono',monospace;font-size:11.67px;color:#624e94">2311</div><div class="t" style="right:818px;top:466px;font-family:'Liberation Mono',monospace;font-size:11.67px;color:#624e94">2052</div><div class="t" style="right:769px;top:466px;font-family:'Liberation Mono',monospace;font-size:11.67px;color:#624e94">1922</div><div class="t" style="right:720px;top:466px;font-family:'Liberation Mono',monospace;font-size:11.67px;color:#624e94">1628</div><div class="t" style="right:671px;top:466px;font-family:'Liberation Mono',monospace;font-size:11.67px;color:#624e94">1405</div><div class="t" style="right:622px;top:466px;font-family:'Liberation Mono',monospace;font-size:11.67px;color:#624e94">1031</div><div class="t" style="right:573px;top:466px;font-family:'Liberation Mono',monospace;font-size:11.67px;color:#624e94">899</div><div class="t" style="right:524px;top:466px;font-family:'Liberation Mono',monospace;font-size:11.67px;color:#624e94">792</div><div class="t" style="right:475px;top:466px;font-family:'Liberation Mono',monospace;font-size:11.67px;color:#624e94">745</div><div class="t" style="right:426px;top:466px;font-family:'Liberation Mono',monospace;font-size:11.67px;color:#624e94">706</div><div class="t" style="right:377px;top:466px;font-family:'Liberation Mono',monospace;font-size:11.67px;color:#624e94">650</div><div class="t" style="right:328px;top:466px;font-family:'Liberation Mono',monospace;font-size:11.67px;color:#624e94">614</div><div class="t" style="right:279px;top:466px;font-family:'Liberation Mono',monospace;font-size:11.67px;color:#624e94">578</div><div class="t" style="right:230px;top:466px;font-family:'Liberation Mono',monospace;font-size:11.67px;color:#624e94">568</div><div class="t" style="right:181px;top:466px;font-family:'Liberation Mono',monospace;font-size:11.67px;color:#624e94">552</div><div class="t" style="right:132px;top:466px;font-family:'Liberation Mono',monospace;font-size:11.67px;color:#624e94">535</div><div class="t" style="right:83px;top:466px;font-family:'Liberation Mono',monospace;font-size:11.67px;color:#624e94">533</div><div class="t" style="right:937px;top:480px;font-family:'Liberation Mono',monospace;font-size:11.67px;color:#c8c8f8">35</div><div class="t" style="right:867px;top:480px;font-family:'Liberation Mono',monospace;font-size:11.67px;color:#624e94">2467</div><div class="t" style="right:818px;top:480px;font-family:'Liberation Mono',monospace;font-size:11.67px;color:#624e94">2214</div><div class="t" style="right:769px;top:480px;font-family:'Liberation Mono',monospace;font-size:11.67px;color:#624e94">2084</div><div class="t" style="right:720px;top:480px;font-family:'Liberation Mono',monospace;font-size:11.67px;color:#624e94">1818</div><div class="t" style="right:671px;top:480px;font-family:'Liberation Mono',monospace;font-size:11.67px;color:#624e94">1536</div><div class="t" style="right:622px;top:480px;font-family:'Liberation Mono',monospace;font-size:11.67px;color:#624e94">1118</div><div class="t" style="right:573px;top:480px;font-family:'Liberation Mono',monospace;font-size:11.67px;color:#624e94">972</div><div class="t" style="right:524px;top:480px;font-family:'Liberation Mono',monospace;font-size:11.67px;color:#624e94">852</div><div class="t" style="right:475px;top:480px;font-family:'Liberation Mono',monospace;font-size:11.67px;color:#624e94">792</div><div class="t" style="right:426px;top:480px;font-family:'Liberation Mono',monospace;font-size:11.67px;color:#624e94">744</div><div class="t" style="right:377px;top:480px;font-family:'Liberation Mono',monospace;font-size:11.67px;color:#624e94">695</div><div class="t" style="right:328px;top:480px;font-family:'Liberation Mono',monospace;font-size:11.67px;color:#624e94">658</div><div class="t" style="right:279px;top:480px;font-family:'Liberation Mono',monospace;font-size:11.67px;color:#624e94">622</div><div class="t" style="right:230px;top:480px;font-family:'Liberation Mono',monospace;font-size:11.67px;color:#624e94">606</div><div class="t" style="right:181px;top:480px;font-family:'Liberation Mono',monospace;font-size:11.67px;color:#624e94">585</div><div class="t" style="right:132px;top:480px;font-family:'Liberation Mono',monospace;font-size:11.67px;color:#624e94">561</div><div class="t" style="right:83px;top:480px;font-family:'Liberation Mono',monospace;font-size:11.67px;color:#624e94">559</div><div class="t" style="right:937px;top:494px;font-family:'Liberation Mono',monospace;font-size:11.67px;color:#c8c8f8">40</div><div class="t" style="right:867px;top:494px;font-family:'Liberation Mono',monospace;font-size:11.67px;color:#624e94">2646</div><div class="t" style="right:818px;top:494px;font-family:'Liberation Mono',monospace;font-size:11.67px;color:#624e94">2376</div><div class="t" style="right:769px;top:494px;font-family:'Liberation Mono',monospace;font-size:11.67px;color:#624e94">2268</div><div class="t" style="right:720px;top:494px;font-family:'Liberation Mono',monospace;font-size:11.67px;color:#624e94">2008</div><div class="t" style="right:671px;top:494px;font-family:'Liberation Mono',monospace;font-size:11.67px;color:#624e94">1668</div><div class="t" style="right:622px;top:494px;font-family:'Liberation Mono',monospace;font-size:11.67px;color:#624e94">1205</div><div class="t" style="right:573px;top:494px;font-family:'Liberation Mono',monospace;font-size:11.67px;color:#624e94">1044</div><div class="t" style="right:524px;top:494px;font-family:'Liberation Mono',monospace;font-size:11.67px;color:#624e94">911</div><div class="t" style="right:475px;top:494px;font-family:'Liberation Mono',monospace;font-size:11.67px;color:#624e94">845</div><div class="t" style="right:426px;top:494px;font-family:'Liberation Mono',monospace;font-size:11.67px;color:#624e94">793</div><div class="t" style="right:377px;top:494px;font-family:'Liberation Mono',monospace;font-size:11.67px;color:#624e94">740</div><div class="t" style="right:328px;top:494px;font-family:'Liberation Mono',monospace;font-size:11.67px;color:#624e94">703</div><div class="t" style="right:279px;top:494px;font-family:'Liberation Mono',monospace;font-size:11.67px;color:#624e94">664</div><div class="t" style="right:230px;top:494px;font-family:'Liberation Mono',monospace;font-size:11.67px;color:#624e94">644</div><div class="t" style="right:181px;top:494px;font-family:'Liberation Mono',monospace;font-size:11.67px;color:#624e94">616</div><div class="t" style="right:132px;top:494px;font-family:'Liberation Mono',monospace;font-size:11.67px;color:#624e94">592</div><div class="t" style="right:83px;top:494px;font-family:'Liberation Mono',monospace;font-size:11.67px;color:#624e94">590</div><div class="t" style="right:937px;top:508px;font-family:'Liberation Mono',monospace;font-size:11.67px;color:#c8c8f8">45</div><div class="t" style="right:867px;top:508px;font-family:'Liberation Mono',monospace;font-size:11.67px;color:#624e94">2808</div><div class="t" style="right:818px;top:508px;font-family:'Liberation Mono',monospace;font-size:11.67px;color:#624e94">2548</div><div class="t" style="right:769px;top:508px;font-family:'Liberation Mono',monospace;font-size:11.67px;color:#624e94">2430</div><div class="t" style="right:720px;top:508px;font-family:'Liberation Mono',monospace;font-size:11.67px;color:#624e94">2166</div><div class="t" style="right:671px;top:508px;font-family:'Liberation Mono',monospace;font-size:11.67px;color:#624e94">1827</div><div class="t" style="right:622px;top:508px;font-family:'Liberation Mono',monospace;font-size:11.67px;color:#624e94">1292</div><div class="t" style="right:573px;top:508px;font-family:'Liberation Mono',monospace;font-size:11.67px;color:#624e94">1115</div><div class="t" style="right:524px;top:508px;font-family:'Liberation Mono',monospace;font-size:11.67px;color:#624e94">972</div><div class="t" style="right:475px;top:508px;font-family:'Liberation Mono',monospace;font-size:11.67px;color:#624e94">900</div><div class="t" style="right:426px;top:508px;font-family:'Liberation Mono',monospace;font-size:11.67px;color:#624e94">843</div><div class="t" style="right:377px;top:508px;font-family:'Liberation Mono',monospace;font-size:11.67px;color:#624e94">785</div><div class="t" style="right:328px;top:508px;font-family:'Liberation Mono',monospace;font-size:11.67px;color:#624e94">745</div><div class="t" style="right:279px;top:508px;font-family:'Liberation Mono',monospace;font-size:11.67px;color:#624e94">704</div><div class="t" style="right:230px;top:508px;font-family:'Liberation Mono',monospace;font-size:11.67px;color:#624e94">684</div><div class="t" style="right:181px;top:508px;font-family:'Liberation Mono',monospace;font-size:11.67px;color:#624e94">655</div><div class="t" style="right:132px;top:508px;font-family:'Liberation Mono',monospace;font-size:11.67px;color:#624e94">622</div><div class="t" style="right:83px;top:508px;font-family:'Liberation Mono',monospace;font-size:11.67px;color:#624e94">619</div><div class="t" style="right:937px;top:522px;font-family:'Liberation Mono',monospace;font-size:11.67px;color:#c8c8f8">50</div><div class="t" style="right:867px;top:522px;font-family:'Liberation Mono',monospace;font-size:11.67px;color:#624e94">3002</div><div class="t" style="right:818px;top:522px;font-family:'Liberation Mono',monospace;font-size:11.67px;color:#624e94">2721</div><div class="t" style="right:769px;top:522px;font-family:'Liberation Mono',monospace;font-size:11.67px;color:#624e94">2592</div><div class="t" style="right:720px;top:522px;font-family:'Liberation Mono',monospace;font-size:11.67px;color:#624e94">2325</div><div class="t" style="right:671px;top:522px;font-family:'Liberation Mono',monospace;font-size:11.67px;color:#624e94">1986</div><div class="t" style="right:622px;top:522px;font-family:'Liberation Mono',monospace;font-size:11.67px;color:#624e94">1380</div><div class="t" style="right:573px;top:522px;font-family:'Liberation Mono',monospace;font-size:11.67px;color:#624e94">1186</div><div class="t" style="right:524px;top:522px;font-family:'Liberation Mono',monospace;font-size:11.67px;color:#624e94">1032</div><div class="t" style="right:475px;top:522px;font-family:'Liberation Mono',monospace;font-size:11.67px;color:#624e94">954</div><div class="t" style="right:426px;top:522px;font-family:'Liberation Mono',monospace;font-size:11.67px;color:#624e94">892</div><div class="t" style="right:377px;top:522px;font-family:'Liberation Mono',monospace;font-size:11.67px;color:#624e94">828</div><div class="t" style="right:328px;top:522px;font-family:'Liberation Mono',monospace;font-size:11.67px;color:#624e94">786</div><div class="t" style="right:279px;top:522px;font-family:'Liberation Mono',monospace;font-size:11.67px;color:#624e94">744</div><div class="t" style="right:230px;top:522px;font-family:'Liberation Mono',monospace;font-size:11.67px;color:#624e94">723</div><div class="t" style="right:181px;top:522px;font-family:'Liberation Mono',monospace;font-size:11.67px;color:#624e94">693</div><div class="t" style="right:132px;top:522px;font-family:'Liberation Mono',monospace;font-size:11.67px;color:#624e94">658</div><div class="t" style="right:83px;top:522px;font-family:'Liberation Mono',monospace;font-size:11.67px;color:#624e94">656</div><div class="t" style="right:937px;top:536px;font-family:'Liberation Mono',monospace;font-size:11.67px;color:#c8c8f8">55</div><div class="t" style="right:867px;top:536px;font-family:'Liberation Mono',monospace;font-size:11.67px;color:#624e94">3169</div><div class="t" style="right:818px;top:536px;font-family:'Liberation Mono',monospace;font-size:11.67px;color:#624e94">2899</div><div class="t" style="right:769px;top:536px;font-family:'Liberation Mono',monospace;font-size:11.67px;color:#624e94">2754</div><div class="t" style="right:720px;top:536px;font-family:'Liberation Mono',monospace;font-size:11.67px;color:#624e94">2484</div><div class="t" style="right:671px;top:536px;font-family:'Liberation Mono',monospace;font-size:11.67px;color:#624e94">2143</div><div class="t" style="right:622px;top:536px;font-family:'Liberation Mono',monospace;font-size:11.67px;color:#624e94">1466</div><div class="t" style="right:573px;top:536px;font-family:'Liberation Mono',monospace;font-size:11.67px;color:#624e94">1258</div><div class="t" style="right:524px;top:536px;font-family:'Liberation Mono',monospace;font-size:11.67px;color:#624e94">1090</div><div class="t" style="right:475px;top:536px;font-family:'Liberation Mono',monospace;font-size:11.67px;color:#624e94">1006</div><div class="t" style="right:426px;top:536px;font-family:'Liberation Mono',monospace;font-size:11.67px;color:#624e94">939</div><div class="t" style="right:377px;top:536px;font-family:'Liberation Mono',monospace;font-size:11.67px;color:#624e94">871</div><div class="t" style="right:328px;top:536px;font-family:'Liberation Mono',monospace;font-size:11.67px;color:#624e94">827</div><div class="t" style="right:279px;top:536px;font-family:'Liberation Mono',monospace;font-size:11.67px;color:#624e94">783</div><div class="t" style="right:230px;top:536px;font-family:'Liberation Mono',monospace;font-size:11.67px;color:#624e94">761</div><div class="t" style="right:181px;top:536px;font-family:'Liberation Mono',monospace;font-size:11.67px;color:#624e94">727</div><div class="t" style="right:132px;top:536px;font-family:'Liberation Mono',monospace;font-size:11.67px;color:#624e94">690</div><div class="t" style="right:83px;top:536px;font-family:'Liberation Mono',monospace;font-size:11.67px;color:#624e94">687</div><div class="t" style="right:937px;top:550px;font-family:'Liberation Mono',monospace;font-size:11.67px;color:#c8c8f8">60</div><div class="t" style="right:867px;top:550px;font-family:'Liberation Mono',monospace;font-size:11.67px;color:#624e94">3337</div><div class="t" style="right:818px;top:550px;font-family:'Liberation Mono',monospace;font-size:11.67px;color:#624e94">3078</div><div class="t" style="right:769px;top:550px;font-family:'Liberation Mono',monospace;font-size:11.67px;color:#624e94">2916</div><div class="t" style="right:720px;top:550px;font-family:'Liberation Mono',monospace;font-size:11.67px;color:#624e94">2646</div><div class="t" style="right:671px;top:550px;font-family:'Liberation Mono',monospace;font-size:11.67px;color:#624e94">2300</div><div class="t" style="right:622px;top:550px;font-family:'Liberation Mono',monospace;font-size:11.67px;color:#624e94">1551</div><div class="t" style="right:573px;top:550px;font-family:'Liberation Mono',monospace;font-size:11.67px;color:#624e94">1329</div><div class="t" style="right:524px;top:550px;font-family:'Liberation Mono',monospace;font-size:11.67px;color:#624e94">1149</div><div class="t" style="right:475px;top:550px;font-family:'Liberation Mono',monospace;font-size:11.67px;color:#624e94">1058</div><div class="t" style="right:426px;top:550px;font-family:'Liberation Mono',monospace;font-size:11.67px;color:#624e94">986</div><div class="t" style="right:377px;top:550px;font-family:'Liberation Mono',monospace;font-size:11.67px;color:#624e94">913</div><div class="t" style="right:328px;top:550px;font-family:'Liberation Mono',monospace;font-size:11.67px;color:#624e94">868</div><div class="t" style="right:279px;top:550px;font-family:'Liberation Mono',monospace;font-size:11.67px;color:#624e94">821</div><div class="t" style="right:230px;top:550px;font-family:'Liberation Mono',monospace;font-size:11.67px;color:#624e94">798</div><div class="t" style="right:181px;top:550px;font-family:'Liberation Mono',monospace;font-size:11.67px;color:#624e94">762</div><div class="t" style="right:132px;top:550px;font-family:'Liberation Mono',monospace;font-size:11.67px;color:#624e94">721</div><div class="t" style="right:83px;top:550px;font-family:'Liberation Mono',monospace;font-size:11.67px;color:#624e94">719</div><div class="t" style="right:937px;top:564px;font-family:'Liberation Mono',monospace;font-size:11.67px;color:#c8c8f8">65</div><div class="t" style="right:867px;top:564px;font-family:'Liberation Mono',monospace;font-size:11.67px;color:#624e94">3504</div><div class="t" style="right:818px;top:564px;font-family:'Liberation Mono',monospace;font-size:11.67px;color:#624e94">3240</div><div class="t" style="right:769px;top:564px;font-family:'Liberation Mono',monospace;font-size:11.67px;color:#624e94">3078</div><div class="t" style="right:720px;top:564px;font-family:'Liberation Mono',monospace;font-size:11.67px;color:#624e94">2802</div><div class="t" style="right:671px;top:564px;font-family:'Liberation Mono',monospace;font-size:11.67px;color:#624e94">2457</div><div class="t" style="right:622px;top:564px;font-family:'Liberation Mono',monospace;font-size:11.67px;color:#624e94">1639</div><div class="t" style="right:573px;top:564px;font-family:'Liberation Mono',monospace;font-size:11.67px;color:#624e94">1405</div><div class="t" style="right:524px;top:564px;font-family:'Liberation Mono',monospace;font-size:11.67px;color:#624e94">1209</div><div class="t" style="right:475px;top:564px;font-family:'Liberation Mono',monospace;font-size:11.67px;color:#624e94">1111</div><div class="t" style="right:426px;top:564px;font-family:'Liberation Mono',monospace;font-size:11.67px;color:#624e94">1034</div><div class="t" style="right:377px;top:564px;font-family:'Liberation Mono',monospace;font-size:11.67px;color:#624e94">956</div><div class="t" style="right:328px;top:564px;font-family:'Liberation Mono',monospace;font-size:11.67px;color:#624e94">908</div><div class="t" style="right:279px;top:564px;font-family:'Liberation Mono',monospace;font-size:11.67px;color:#624e94">858</div><div class="t" style="right:230px;top:564px;font-family:'Liberation Mono',monospace;font-size:11.67px;color:#624e94">832</div><div class="t" style="right:181px;top:564px;font-family:'Liberation Mono',monospace;font-size:11.67px;color:#624e94">794</div><div class="t" style="right:132px;top:564px;font-family:'Liberation Mono',monospace;font-size:11.67px;color:#624e94">752</div><div class="t" style="right:83px;top:564px;font-family:'Liberation Mono',monospace;font-size:11.67px;color:#624e94">750</div><div class="t" style="right:937px;top:578px;font-family:'Liberation Mono',monospace;font-size:11.67px;color:#c8c8f8">70</div><div class="t" style="right:867px;top:578px;font-family:'Liberation Mono',monospace;font-size:11.67px;color:#624e94">3672</div><div class="t" style="right:818px;top:578px;font-family:'Liberation Mono',monospace;font-size:11.67px;color:#624e94">3402</div><div class="t" style="right:769px;top:578px;font-family:'Liberation Mono',monospace;font-size:11.67px;color:#624e94">3240</div><div class="t" style="right:720px;top:578px;font-family:'Liberation Mono',monospace;font-size:11.67px;color:#624e94">2959</div><div class="t" style="right:671px;top:578px;font-family:'Liberation Mono',monospace;font-size:11.67px;color:#624e94">2613</div><div class="t" style="right:622px;top:578px;font-family:'Liberation Mono',monospace;font-size:11.67px;color:#624e94">1725</div><div class="t" style="right:573px;top:578px;font-family:'Liberation Mono',monospace;font-size:11.67px;color:#624e94">1479</div><div class="t" style="right:524px;top:578px;font-family:'Liberation Mono',monospace;font-size:11.67px;color:#624e94">1269</div><div class="t" style="right:475px;top:578px;font-family:'Liberation Mono',monospace;font-size:11.67px;color:#624e94">1164</div><div class="t" style="right:426px;top:578px;font-family:'Liberation Mono',monospace;font-size:11.67px;color:#624e94">1082</div><div class="t" style="right:377px;top:578px;font-family:'Liberation Mono',monospace;font-size:11.67px;color:#624e94">999</div><div class="t" style="right:328px;top:578px;font-family:'Liberation Mono',monospace;font-size:11.67px;color:#624e94">947</div><div class="t" style="right:279px;top:578px;font-family:'Liberation Mono',monospace;font-size:11.67px;color:#624e94">895</div><div class="t" style="right:230px;top:578px;font-family:'Liberation Mono',monospace;font-size:11.67px;color:#624e94">868</div><div class="t" style="right:181px;top:578px;font-family:'Liberation Mono',monospace;font-size:11.67px;color:#624e94">827</div><div class="t" style="right:132px;top:578px;font-family:'Liberation Mono',monospace;font-size:11.67px;color:#624e94">780</div><div class="t" style="right:83px;top:578px;font-family:'Liberation Mono',monospace;font-size:11.67px;color:#624e94">778</div><div class="t" style="right:937px;top:592px;font-family:'Liberation Mono',monospace;font-size:11.67px;color:#c8c8f8">75</div><div class="t" style="right:867px;top:592px;font-family:'Liberation Mono',monospace;font-size:11.67px;color:#624e94">3839</div><div class="t" style="right:818px;top:592px;font-family:'Liberation Mono',monospace;font-size:11.67px;color:#624e94">3564</div><div class="t" style="right:769px;top:592px;font-family:'Liberation Mono',monospace;font-size:11.67px;color:#624e94">3402</div><div class="t" style="right:720px;top:592px;font-family:'Liberation Mono',monospace;font-size:11.67px;color:#624e94">3117</div><div class="t" style="right:671px;top:592px;font-family:'Liberation Mono',monospace;font-size:11.67px;color:#624e94">2770</div><div class="t" style="right:622px;top:592px;font-family:'Liberation Mono',monospace;font-size:11.67px;color:#624e94">1813</div><div class="t" style="right:573px;top:592px;font-family:'Liberation Mono',monospace;font-size:11.67px;color:#624e94">1556</div><div class="t" style="right:524px;top:592px;font-family:'Liberation Mono',monospace;font-size:11.67px;color:#624e94">1331</div><div class="t" style="right:475px;top:592px;font-family:'Liberation Mono',monospace;font-size:11.67px;color:#624e94">1219</div><div class="t" style="right:426px;top:592px;font-family:'Liberation Mono',monospace;font-size:11.67px;color:#624e94">1131</div><div class="t" style="right:377px;top:592px;font-family:'Liberation Mono',monospace;font-size:11.67px;color:#624e94">1043</div><div class="t" style="right:328px;top:592px;font-family:'Liberation Mono',monospace;font-size:11.67px;color:#624e94">989</div><div class="t" style="right:279px;top:592px;font-family:'Liberation Mono',monospace;font-size:11.67px;color:#624e94">934</div><div class="t" style="right:230px;top:592px;font-family:'Liberation Mono',monospace;font-size:11.67px;color:#624e94">903</div><div class="t" style="right:181px;top:592px;font-family:'Liberation Mono',monospace;font-size:11.67px;color:#624e94">859</div><div class="t" style="right:132px;top:592px;font-family:'Liberation Mono',monospace;font-size:11.67px;color:#624e94">808</div><div class="t" style="right:83px;top:592px;font-family:'Liberation Mono',monospace;font-size:11.67px;color:#624e94">806</div><div class="t" style="right:937px;top:606px;font-family:'Liberation Mono',monospace;font-size:11.67px;color:#c8c8f8">80</div><div class="t" style="right:867px;top:606px;font-family:'Liberation Mono',monospace;font-size:11.67px;color:#624e94">4006</div><div class="t" style="right:818px;top:606px;font-family:'Liberation Mono',monospace;font-size:11.67px;color:#624e94">3726</div><div class="t" style="right:769px;top:606px;font-family:'Liberation Mono',monospace;font-size:11.67px;color:#624e94">3564</div><div class="t" style="right:720px;top:606px;font-family:'Liberation Mono',monospace;font-size:11.67px;color:#624e94">3272</div><div class="t" style="right:671px;top:606px;font-family:'Liberation Mono',monospace;font-size:11.67px;color:#624e94">2926</div><div class="t" style="right:622px;top:606px;font-family:'Liberation Mono',monospace;font-size:11.67px;color:#624e94">1900</div><div class="t" style="right:573px;top:606px;font-family:'Liberation Mono',monospace;font-size:11.67px;color:#624e94">1632</div><div class="t" style="right:524px;top:606px;font-family:'Liberation Mono',monospace;font-size:11.67px;color:#624e94">1393</div><div class="t" style="right:475px;top:606px;font-family:'Liberation Mono',monospace;font-size:11.67px;color:#624e94">1273</div><div class="t" style="right:426px;top:606px;font-family:'Liberation Mono',monospace;font-size:11.67px;color:#624e94">1180</div><div class="t" style="right:377px;top:606px;font-family:'Liberation Mono',monospace;font-size:11.67px;color:#624e94">1086</div><div class="t" style="right:328px;top:606px;font-family:'Liberation Mono',monospace;font-size:11.67px;color:#624e94">1030</div><div class="t" style="right:279px;top:606px;font-family:'Liberation Mono',monospace;font-size:11.67px;color:#624e94">973</div><div class="t" style="right:230px;top:606px;font-family:'Liberation Mono',monospace;font-size:11.67px;color:#624e94">940</div><div class="t" style="right:181px;top:606px;font-family:'Liberation Mono',monospace;font-size:11.67px;color:#624e94">892</div><div class="t" style="right:132px;top:606px;font-family:'Liberation Mono',monospace;font-size:11.67px;color:#624e94">837</div><div class="t" style="right:83px;top:606px;font-family:'Liberation Mono',monospace;font-size:11.67px;color:#624e94">834</div><div class="t" style="right:937px;top:620px;font-family:'Liberation Mono',monospace;font-size:11.67px;color:#c8c8f8">85</div><div class="t" style="right:867px;top:620px;font-family:'Liberation Mono',monospace;font-size:11.67px;color:#624e94">4179</div><div class="t" style="right:818px;top:620px;font-family:'Liberation Mono',monospace;font-size:11.67px;color:#624e94">3898</div><div class="t" style="right:769px;top:620px;font-family:'Liberation Mono',monospace;font-size:11.67px;color:#624e94">3726</div><div class="t" style="right:720px;top:620px;font-family:'Liberation Mono',monospace;font-size:11.67px;color:#624e94">3429</div><div class="t" style="right:671px;top:620px;font-family:'Liberation Mono',monospace;font-size:11.67px;color:#624e94">3083</div><div class="t" style="right:622px;top:620px;font-family:'Liberation Mono',monospace;font-size:11.67px;color:#624e94">1987</div><div class="t" style="right:573px;top:620px;font-family:'Liberation Mono',monospace;font-size:11.67px;color:#624e94">1706</div><div class="t" style="right:524px;top:620px;font-family:'Liberation Mono',monospace;font-size:11.67px;color:#624e94">1454</div><div class="t" style="right:475px;top:620px;font-family:'Liberation Mono',monospace;font-size:11.67px;color:#624e94">1328</div><div class="t" style="right:426px;top:620px;font-family:'Liberation Mono',monospace;font-size:11.67px;color:#624e94">1230</div><div class="t" style="right:377px;top:620px;font-family:'Liberation Mono',monospace;font-size:11.67px;color:#624e94">1131</div><div class="t" style="right:328px;top:620px;font-family:'Liberation Mono',monospace;font-size:11.67px;color:#624e94">1073</div><div class="t" style="right:279px;top:620px;font-family:'Liberation Mono',monospace;font-size:11.67px;color:#624e94">1014</div><div class="t" style="right:230px;top:620px;font-family:'Liberation Mono',monospace;font-size:11.67px;color:#624e94">978</div><div class="t" style="right:181px;top:620px;font-family:'Liberation Mono',monospace;font-size:11.67px;color:#624e94">925</div><div class="t" style="right:132px;top:620px;font-family:'Liberation Mono',monospace;font-size:11.67px;color:#624e94">865</div><div class="t" style="right:83px;top:620px;font-family:'Liberation Mono',monospace;font-size:11.67px;color:#624e94">862</div><div class="t" style="right:937px;top:634px;font-family:'Liberation Mono',monospace;font-size:11.67px;color:#c8c8f8">90</div><div class="t" style="right:867px;top:634px;font-family:'Liberation Mono',monospace;font-size:11.67px;color:#624e94">4352</div><div class="t" style="right:818px;top:634px;font-family:'Liberation Mono',monospace;font-size:11.67px;color:#624e94">4071</div><div class="t" style="right:769px;top:634px;font-family:'Liberation Mono',monospace;font-size:11.67px;color:#624e94">3888</div><div class="t" style="right:720px;top:634px;font-family:'Liberation Mono',monospace;font-size:11.67px;color:#624e94">3585</div><div class="t" style="right:671px;top:634px;font-family:'Liberation Mono',monospace;font-size:11.67px;color:#624e94">3240</div><div class="t" style="right:622px;top:634px;font-family:'Liberation Mono',monospace;font-size:11.67px;color:#624e94">2073</div><div class="t" style="right:573px;top:634px;font-family:'Liberation Mono',monospace;font-size:11.67px;color:#624e94">1778</div><div class="t" style="right:524px;top:634px;font-family:'Liberation Mono',monospace;font-size:11.67px;color:#624e94">1514</div><div class="t" style="right:475px;top:634px;font-family:'Liberation Mono',monospace;font-size:11.67px;color:#624e94">1382</div><div class="t" style="right:426px;top:634px;font-family:'Liberation Mono',monospace;font-size:11.67px;color:#624e94">1279</div><div class="t" style="right:377px;top:634px;font-family:'Liberation Mono',monospace;font-size:11.67px;color:#624e94">1177</div><div class="t" style="right:328px;top:634px;font-family:'Liberation Mono',monospace;font-size:11.67px;color:#624e94">1115</div><div class="t" style="right:279px;top:634px;font-family:'Liberation Mono',monospace;font-size:11.67px;color:#624e94">1054</div><div class="t" style="right:230px;top:634px;font-family:'Liberation Mono',monospace;font-size:11.67px;color:#624e94">1015</div><div class="t" style="right:181px;top:634px;font-family:'Liberation Mono',monospace;font-size:11.67px;color:#624e94">957</div><div class="t" style="right:132px;top:634px;font-family:'Liberation Mono',monospace;font-size:11.67px;color:#624e94">892</div><div class="t" style="right:83px;top:634px;font-family:'Liberation Mono',monospace;font-size:11.67px;color:#624e94">889</div><div class="t" style="right:937px;top:648px;font-family:'Liberation Mono',monospace;font-size:11.67px;color:#c8c8f8">100</div><div class="t" style="right:867px;top:648px;font-family:'Liberation Mono',monospace;font-size:11.67px;color:#624e94">4698</div><div class="t" style="right:818px;top:648px;font-family:'Liberation Mono',monospace;font-size:11.67px;color:#624e94">4428</div><div class="t" style="right:769px;top:648px;font-family:'Liberation Mono',monospace;font-size:11.67px;color:#624e94">4212</div><div class="t" style="right:720px;top:648px;font-family:'Liberation Mono',monospace;font-size:11.67px;color:#624e94">3909</div><div class="t" style="right:671px;top:648px;font-family:'Liberation Mono',monospace;font-size:11.67px;color:#624e94">3553</div><div class="t" style="right:622px;top:648px;font-family:'Liberation Mono',monospace;font-size:11.67px;color:#624e94">2241</div><div class="t" style="right:573px;top:648px;font-family:'Liberation Mono',monospace;font-size:11.67px;color:#624e94">1923</div><div class="t" style="right:524px;top:648px;font-family:'Liberation Mono',monospace;font-size:11.67px;color:#624e94">1630</div><div class="t" style="right:475px;top:648px;font-family:'Liberation Mono',monospace;font-size:11.67px;color:#624e94">1485</div><div class="t" style="right:426px;top:648px;font-family:'Liberation Mono',monospace;font-size:11.67px;color:#624e94">1373</div><div class="t" style="right:377px;top:648px;font-family:'Liberation Mono',monospace;font-size:11.67px;color:#624e94">1261</div><div class="t" style="right:328px;top:648px;font-family:'Liberation Mono',monospace;font-size:11.67px;color:#624e94">1197</div><div class="t" style="right:279px;top:648px;font-family:'Liberation Mono',monospace;font-size:11.67px;color:#624e94">1134</div><div class="t" style="right:230px;top:648px;font-family:'Liberation Mono',monospace;font-size:11.67px;color:#624e94">1089</div><div class="t" style="right:181px;top:648px;font-family:'Liberation Mono',monospace;font-size:11.67px;color:#624e94">1023</div><div class="t" style="right:132px;top:648px;font-family:'Liberation Mono',monospace;font-size:11.67px;color:#624e94">949</div><div class="t" style="right:83px;top:648px;font-family:'Liberation Mono',monospace;font-size:11.67px;color:#624e94">947</div><div class="t" style="right:937px;top:662px;font-family:'Liberation Mono',monospace;font-size:11.67px;color:#c8c8f8">120</div><div class="t" style="right:867px;top:662px;font-family:'Liberation Mono',monospace;font-size:11.67px;color:#624e94">5400</div><div class="t" style="right:818px;top:662px;font-family:'Liberation Mono',monospace;font-size:11.67px;color:#624e94">5076</div><div class="t" style="right:769px;top:662px;font-family:'Liberation Mono',monospace;font-size:11.67px;color:#624e94">4860</div><div class="t" style="right:720px;top:662px;font-family:'Liberation Mono',monospace;font-size:11.67px;color:#624e94">4536</div><div class="t" style="right:671px;top:662px;font-family:'Liberation Mono',monospace;font-size:11.67px;color:#624e94">4190</div><div class="t" style="right:622px;top:662px;font-family:'Liberation Mono',monospace;font-size:11.67px;color:#624e94">2592</div><div class="t" style="right:573px;top:662px;font-family:'Liberation Mono',monospace;font-size:11.67px;color:#624e94">2214</div><div class="t" style="right:524px;top:662px;font-family:'Liberation Mono',monospace;font-size:11.67px;color:#624e94">1871</div><div class="t" style="right:475px;top:662px;font-family:'Liberation Mono',monospace;font-size:11.67px;color:#624e94">1701</div><div class="t" style="right:426px;top:662px;font-family:'Liberation Mono',monospace;font-size:11.67px;color:#624e94">1566</div><div class="t" style="right:377px;top:662px;font-family:'Liberation Mono',monospace;font-size:11.67px;color:#624e94">1431</div><div class="t" style="right:328px;top:662px;font-family:'Liberation Mono',monospace;font-size:11.67px;color:#624e94">1358</div><div class="t" style="right:279px;top:662px;font-family:'Liberation Mono',monospace;font-size:11.67px;color:#624e94">1285</div><div class="t" style="right:230px;top:662px;font-family:'Liberation Mono',monospace;font-size:11.67px;color:#624e94">1232</div><div class="t" style="right:181px;top:662px;font-family:'Liberation Mono',monospace;font-size:11.67px;color:#624e94">1152</div><div class="t" style="right:132px;top:662px;font-family:'Liberation Mono',monospace;font-size:11.67px;color:#624e94">1062</div><div class="ab" style="left:1157px;top:659px;width:42px;height:13px;background:#343a34"></div><div class="t" style="right:83px;top:662px;font-family:'Liberation Mono',monospace;font-size:11.67px;color:#b8d890">1060</div>
<div class="ab" style="left:762px;top:457px;width:101px;height:20px;background:linear-gradient(#ffffff,#e4e5f0);border:1px solid #767676;border-radius:3px;box-shadow:2px 2px 2px rgba(0,0,0,.35)"></div>
<div class="t" style="left:767px;top:461px;font-size:11.3px;color:#4c4c4c">Delta: +54 (7.9%)</div>
<div class="ab" style="left:1263px;top:141px;width:17px;height:594px;background:#f0f0f0"></div>
<svg style="left:1267px;top:151px" width="8" height="5" viewBox="0 0 8 5"><path d="M0 5H8L4 0Z" fill="#404040"/></svg>
<div class="ab" style="left:1264px;top:158px;width:15px;height:557px;border:1px solid #9a9a9a;border-radius:2px;background:linear-gradient(90deg,#f4f4f4,#e9e9e9 50%,#d8d8d8)"></div>
<div class="ab" style="left:1268px;top:432px;width:7px;height:7px;border-top:1px solid #606060;border-bottom:1px solid #606060"></div><div class="ab" style="left:1268px;top:435px;width:7px;height:1px;background:#606060"></div>
<svg style="left:1267px;top:724px" width="8" height="4" viewBox="0 0 8 4"><path d="M0 0H8L4 4Z" fill="#404040"/></svg>
<div class="ab" style="left:309px;top:734px;width:972px;height:16px;background:#f0f0f0"></div>
<div class="ab" style="left:309px;top:734px;width:99px;height:16px;background:#808080"></div>
<svg style="left:309px;top:734px" width="100" height="16" viewBox="0 0 100 16"><path d="M69 0L75 15H92L98 0Z" fill="#c4c4c4"/><path d="M69 0L75 15H92L98 0" fill="none" stroke="#000" stroke-width="1"/><path d="M42 0L48 15H65L71 0Z" fill="#c4c4c4"/><path d="M42 0L48 15H65L71 0" fill="none" stroke="#000" stroke-width="1"/><path d="M0 0L7 15H39L46 0Z" fill="#fff"/><path d="M0 0L7 15H39L46 0" fill="none" stroke="#000" stroke-width="1"/></svg>
<div class="t" style="left:316px;top:737px;font-family:'Liberation Mono';font-weight:bold;font-size:12.5px">Text</div>
<div class="ab" style="left:317px;top:747px;width:6px;height:1px;background:#000"></div>
<div class="t" style="left:357px;top:737px;font-family:'Liberation Mono';font-weight:bold;font-size:12.5px">2d</div>
<div class="t" style="left:384px;top:737px;font-family:'Liberation Mono';font-weight:bold;font-size:12.5px">3d</div>
<svg style="left:414px;top:738px" width="4" height="8" viewBox="0 0 4 8"><path d="M4 0V8L0 4Z" fill="#404040"/></svg>
<div class="ab" style="left:426px;top:735px;width:763px;height:15px;border:1px solid #9a9a9a;border-radius:2px;background:linear-gradient(#f4f4f4,#e9e9e9 50%,#d8d8d8)"></div>
<div class="ab" style="left:803px;top:739px;width:7px;height:7px;border-left:1px solid #606060;border-right:1px solid #606060"></div><div class="ab" style="left:806px;top:739px;width:1px;height:7px;background:#606060"></div>
<svg style="left:1253px;top:738px" width="4" height="8" viewBox="0 0 4 8"><path d="M0 0V8L4 4Z" fill="#404040"/></svg>
<div class="ab" style="left:1263px;top:735px;width:17px;height:15px;background:#c8c8c8"></div>
<div class="ab" style="left:0;top:750px;width:1282px;height:1px;background:#c4c4c4"></div>
<div class="ab" style="left:0;top:751px;width:1282px;height:21px;background:#f0f0f0"></div>
<div class="ab" style="left:0;top:751px;width:1282px;height:1px;background:#fafafa"></div>
<div class="ab" style="left:0;top:752px;width:1282px;height:1px;background:#a4a4a4"></div>
<div class="t" style="left:4px;top:757px;font-size:11.4px">Выбрано: 578</div>
<svg style="left:566px;top:756px" width="12" height="13" viewBox="0 0 12 13"><path d="M0.5 0.5H10.5V3H4.5L8 6.5L4.5 10H10.5V12.5H0.5V11L5 6.5L0.5 2Z" fill="#20a020" stroke="#004000" stroke-width=".8"/></svg>
<svg style="left:586px;top:756px" width="12" height="13" viewBox="0 0 12 13"><circle cx="6" cy="6.5" r="5" fill="#30c030" stroke="#006000"/></svg>
<svg style="left:604px;top:757px" width="12" height="10" viewBox="0 0 12 10"><path d="M4 1L1 5L4 9M8 1L11 5L8 9" fill="none" stroke="#b0b0b0" stroke-width="1.3"/></svg>
<div class="t" style="left:624px;top:757px;font-size:12px">Все К/С ok - 0 Блока(ов) к/сумм: Ок</div>
<div class="ab" style="left:826px;top:753px;width:1px;height:18px;background:#d0d0d0"></div>
<svg style="left:837px;top:757px" width="16" height="10" viewBox="0 0 16 10"><path d="M1 7C2 4 5 3 8 3L13 1L15 2L14 6C12 8 8 9 5 9C3 9 1 9 1 7Z" fill="#fff" stroke="#000" stroke-width="1.2"/></svg>
<div class="t" style="left:860px;top:757px;font-size:11.7px">Нет OLS-Модуля</div>
<div class="ab" style="left:955px;top:753px;width:1px;height:18px;background:#d0d0d0"></div>
<div class="t" style="left:961px;top:757px;font-size:11.45px">Курсор: D8DA2 =&gt; 01060 (00982) -&gt; 78 (7.90%), Ширина: 17</div>
</body></html>
